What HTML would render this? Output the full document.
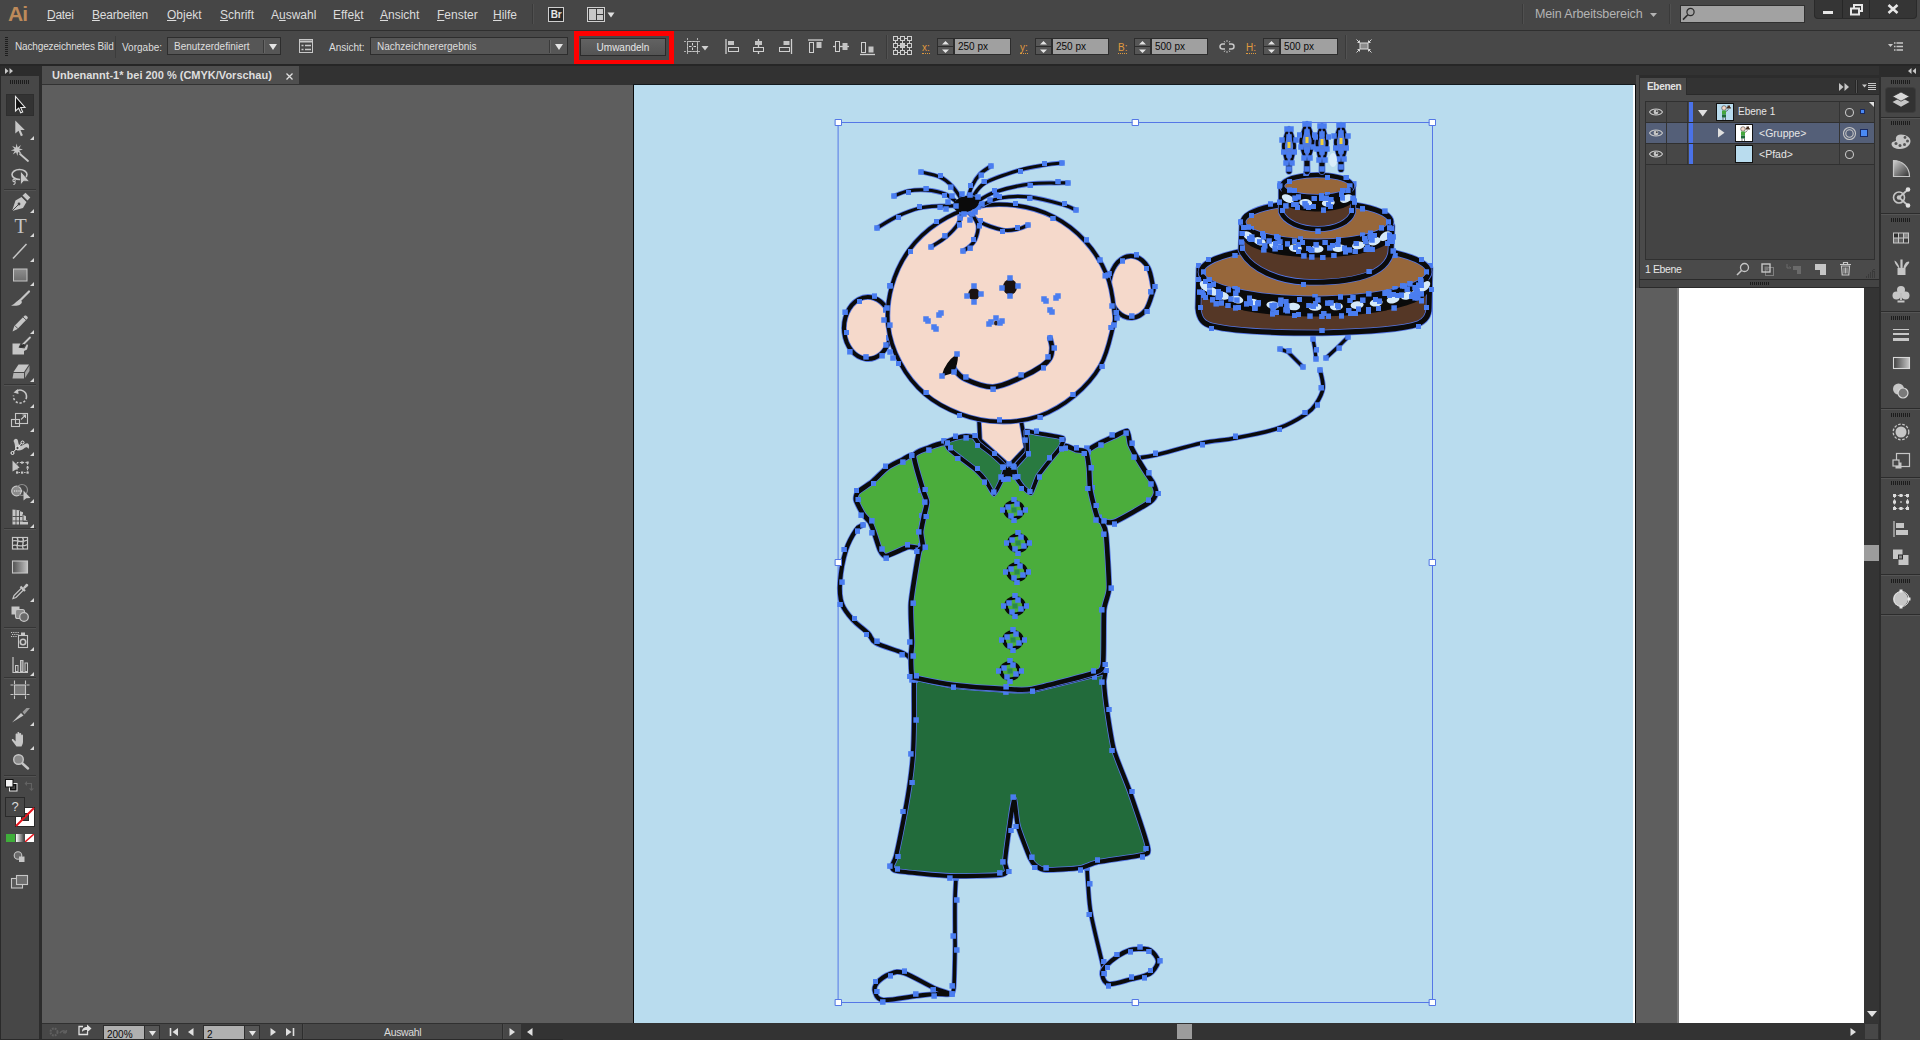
<!DOCTYPE html>
<html lang="de">
<head>
<meta charset="utf-8">
<title>Adobe Illustrator</title>
<style>
html,body{margin:0;padding:0;}
body{width:1920px;height:1040px;overflow:hidden;background:#474747;font-family:"Liberation Sans",sans-serif;font-size:11px;color:#d8d8d8;position:relative;}
.abs{position:absolute;}
#menubar{left:0;top:0;width:1920px;height:30px;background:#464646;}
#menubar .mi{position:absolute;top:8px;font-size:12px;color:#dcdcdc;white-space:nowrap;}
#menubar .mi u{text-decoration:underline;text-underline-offset:1px;}
#ctrl{left:0;top:31px;width:1920px;height:33px;background:#484848;border-top:1px solid #2f2f2f;box-sizing:content-box;top:30px;}
#ctrl .t{position:absolute;top:10px;font-size:10px;color:#dedede;white-space:nowrap;}
#ctrl .o{color:#e09a3e;}
.dd{position:absolute;top:6px;height:18px;background:#565656;border:1px solid #2d2d2d;box-sizing:border-box;}
.inp{position:absolute;top:7px;height:17px;background:#a0a0a0;border:1px solid #2d2d2d;box-sizing:border-box;color:#0a0a0a;font-size:10px;line-height:15px;padding-left:3px;}
.spin{position:absolute;top:7px;width:17px;height:17px;background:#565656;border:1px solid #2d2d2d;box-sizing:border-box;}
#gap{left:0;top:64px;width:1920px;height:2px;background:#262626;}
#tools{left:0;top:66px;width:39px;height:974px;background:#474747;border-left:1px solid #2a2a2a;box-sizing:border-box;}
#toolsgap{left:39px;top:66px;width:3px;height:974px;background:#2c2c2c;}
#tabbar{left:42px;top:66px;width:1837px;height:19px;background:#323232;}
#tab{left:42px;top:66px;width:257px;height:18px;background:#4f4f4f;}
#canvas{left:42px;top:85px;width:1822px;height:938px;background:#5e5e5e;}
#artboard{left:634px;top:85px;width:999px;height:938px;background:#b9dcee;}
#status{left:42px;top:1023px;width:1837px;height:17px;background:#333333;}
#dock{left:1881px;top:66px;width:39px;height:974px;background:#474747;}
</style>
</head>
<body>
<div id="menubar" class="abs">
<span class="abs" style="left:8px;top:0px;font-size:21px;font-weight:bold;color:#bd8a5a;letter-spacing:-0.8px;line-height:27px;">Ai</span>
<span class="mi" style="left:47px;letter-spacing:-0.3px"><u>D</u>atei</span>
<span class="mi" style="left:92px;letter-spacing:-0.2px"><u>B</u>earbeiten</span>
<span class="mi" style="left:167px"><u>O</u>bjekt</span>
<span class="mi" style="left:220px"><u>S</u>chrift</span>
<span class="mi" style="left:271px">A<u>u</u>swahl</span>
<span class="mi" style="left:333px">Effe<u>k</u>t</span>
<span class="mi" style="left:380px"><u>A</u>nsicht</span>
<span class="mi" style="left:437px"><u>F</u>enster</span>
<span class="mi" style="left:493px"><u>H</u>ilfe</span>
<div class="abs" style="left:532px;top:4px;width:1px;height:20px;background:#3a3a3a;border-right:1px solid #505050"></div>
<div class="abs" style="left:548px;top:7px;width:16px;height:15px;box-sizing:border-box;border:1px solid #cfcfcf;background:#2a2a2a;color:#e6e6e6;font-size:10px;font-weight:bold;line-height:13px;text-align:center;letter-spacing:-0.3px;">Br</div>
<svg class="abs" style="left:587px;top:7px" width="28" height="16" viewBox="0 0 28 16"><rect x="0.5" y="0.5" width="17" height="14" fill="#3a3a3a" stroke="#cfcfcf"/><rect x="2" y="2" width="7" height="11" fill="#c8c8c8"/><rect x="10" y="2" width="6" height="5" fill="#c8c8c8"/><rect x="10" y="8" width="6" height="5" fill="#c8c8c8"/><path d="M20.5 5.5h7l-3.5 5z" fill="#e0e0e0"/></svg>
<div class="abs" style="left:1522px;top:4px;width:1px;height:20px;background:#3a3a3a;border-right:1px solid #505050"></div>
<span class="abs" style="left:1535px;top:7px;font-size:12.5px;color:#b4b4b4;white-space:nowrap;letter-spacing:-0.12px" id="mab">Mein Arbeitsbereich</span>
<svg class="abs" style="left:1650px;top:13px" width="7" height="4"><path d="M0 0h7l-3.500 4z" fill="#b4b4b4"/></svg>
<div class="abs" style="left:1669px;top:4px;width:1px;height:20px;background:#3a3a3a;border-right:1px solid #505050"></div>
<div class="abs" style="left:1680px;top:5px;width:125px;height:18px;box-sizing:border-box;background:#a2a2a2;border:1px solid #303030;"></div>
<svg class="abs" style="left:1682px;top:7px" width="14" height="14" viewBox="0 0 14 14"><circle cx="8.500" cy="5" r="3.600" fill="none" stroke="#2a2a2a" stroke-width="1.200"/><path d="M5.800 7.800L1 12.600" stroke="#2a2a2a" stroke-width="1.600"/></svg>
<div class="abs" style="left:1814px;top:0;width:103px;height:19px;background:#353535;border:1px solid #2a2a2a;border-top:none;border-radius:0 0 4px 4px;box-sizing:border-box;"></div>
<div class="abs" style="left:1842px;top:0;width:1px;height:18px;background:#262626"></div>
<div class="abs" style="left:1869px;top:0;width:1px;height:18px;background:#262626"></div>
<div class="abs" style="left:1823px;top:11px;width:10px;height:3px;background:#e6e6e6"></div>
<svg class="abs" style="left:1850px;top:4px" width="13" height="12" viewBox="0 0 13 12"><rect x="4" y="1" width="8" height="6" fill="none" stroke="#e6e6e6" stroke-width="2"/><rect x="1" y="4.500" width="8" height="6" fill="#353535" stroke="#e6e6e6" stroke-width="2"/></svg>
<svg class="abs" style="left:1887px;top:4px" width="12" height="10" viewBox="0 0 12 10"><path d="M1.500 1L10.500 9M10.500 1L1.500 9" stroke="#e6e6e6" stroke-width="2.600"/></svg>
</div>
<div id="ctrl" class="abs">
<div class="abs" style="left:5px;top:6px;width:3px;height:20px;background:repeating-linear-gradient(to bottom,#1e1e1e 0 1px,transparent 1px 2px)"></div>
<span class="t" style="left:15px;letter-spacing:-0.15px">Nachgezeichnetes Bild</span>
<div class="abs" style="left:115px;top:5px;width:1px;height:22px;background:#3c3c3c"></div>
<span class="t" style="left:122px;top:11px">Vorgabe:</span>
<div class="dd" style="left:167px;width:114px"></div>
<span class="t" style="left:174px">Benutzerdefiniert</span>
<div class="abs" style="left:263px;top:9px;width:1px;height:13px;background:#3a3a3a;border-right:1px solid #666"></div>
<svg class="abs" style="left:269px;top:13px" width="8" height="6"><path d="M0 0h8l-4 6z" fill="#e4e4e4"/></svg>
<svg class="abs" style="left:299px;top:8px" width="15" height="15" viewBox="0 0 15 15"><rect x="0.500" y="0.500" width="13" height="13" fill="none" stroke="#c8c8c8"/><path d="M1 2.500h12" stroke="#c8c8c8" stroke-width="2"/><path d="M2.500 6.500h2M6 6.500h6M2.500 10.500h2M6 10.500h6" stroke="#c8c8c8" stroke-width="1.300"/></svg>
<span class="t" style="left:329px;top:11px">Ansicht:</span>
<div class="dd" style="left:370px;width:198px"></div>
<span class="t" style="left:377px">Nachzeichnerergebnis</span>
<div class="abs" style="left:549px;top:9px;width:1px;height:13px;background:#3a3a3a;border-right:1px solid #666"></div>
<svg class="abs" style="left:555px;top:13px" width="8" height="6"><path d="M0 0h8l-4 6z" fill="#e4e4e4"/></svg>
<div class="abs" style="left:574px;top:0px;width:100px;height:34px;box-sizing:border-box;border:5px solid #ff0000;"></div>
<div class="abs" style="left:580px;top:7px;width:86px;height:18px;box-sizing:border-box;border:1px solid #2b2b2b;background:linear-gradient(#626262,#545454);color:#e6e6e6;font-size:10px;line-height:17px;text-align:center;">Umwandeln</div>
<svg class="abs" style="left:684px;top:7px" width="26" height="18" viewBox="0 0 26 18"><rect x="3.500" y="3.500" width="10" height="10" fill="none" stroke="#c8c8c8"/><path d="M0 3.500h17M0 13.500h17M3.500 0v17M13.500 0v17" stroke="#b0b0b0" stroke-width="1" stroke-dasharray="2 1.500"/><path d="M5 8.500h2.500M9.500 8.500H12M8.500 5v2.500M8.500 9.500V12" stroke="#d8d8d8"/><path d="M17.500 8h7L21 12.500z" fill="#d0d0d0"/></svg><svg class="abs" style="left:725px;top:8px" width="15" height="16" viewBox="0 0 15 16"><path d="M1 0v15" stroke="#d0d0d0" stroke-width="1.300"/><rect x="3" y="2" width="6" height="4" fill="#c4c4c4"/><rect x="3.500" y="8.500" width="10" height="4" fill="none" stroke="#d0d0d0"/></svg>
<svg class="abs" style="left:752px;top:8px" width="13" height="16" viewBox="0 0 13 16"><path d="M6.500 0v15" stroke="#d0d0d0" stroke-width="1.300"/><rect x="3" y="2" width="7" height="4" fill="#c4c4c4"/><rect x="1.500" y="8.500" width="10" height="4" fill="#484848" stroke="#d0d0d0"/></svg>
<svg class="abs" style="left:778px;top:8px" width="15" height="16" viewBox="0 0 15 16"><path d="M13.500 0v15" stroke="#d0d0d0" stroke-width="1.300"/><rect x="5.500" y="2" width="6" height="4" fill="#c4c4c4"/><rect x="1.500" y="8.500" width="10" height="4" fill="none" stroke="#d0d0d0"/></svg>
<svg class="abs" style="left:808px;top:8px" width="16" height="15" viewBox="0 0 16 15"><path d="M0 1h15" stroke="#d0d0d0" stroke-width="1.300"/><rect x="1.500" y="3.500" width="4" height="10" fill="none" stroke="#d0d0d0"/><rect x="8.500" y="3" width="5" height="6" fill="#c4c4c4"/></svg>
<svg class="abs" style="left:833px;top:9px" width="17" height="13" viewBox="0 0 17 13"><path d="M0 6.500h16" stroke="#d0d0d0" stroke-width="1.300"/><rect x="2.500" y="1.500" width="4" height="10" fill="#484848" stroke="#d0d0d0"/><rect x="9.500" y="3" width="5" height="7" fill="#c4c4c4"/></svg>
<svg class="abs" style="left:860px;top:10px" width="16" height="15" viewBox="0 0 16 15"><path d="M0 13.500h15" stroke="#d0d0d0" stroke-width="1.300"/><rect x="1.500" y="1.500" width="4" height="10" fill="none" stroke="#d0d0d0"/><rect x="8.500" y="5.500" width="5" height="6" fill="#c4c4c4"/></svg>
<div class="abs" style="left:886px;top:4px;width:1px;height:24px;background:#3a3a3a;border-right:1px solid #525252"></div>
<svg class="abs" style="left:893px;top:5px" width="20" height="20" viewBox="0 0 20 20"><path d="M2.500 2.500h14v14h-14zM9.500 2.500v14M2.500 9.500h14" fill="none" stroke="#cfcfcf" stroke-width="1"/><rect x="0.5" y="0.5" width="4" height="4" fill="#484848" stroke="#cfcfcf"/><rect x="7.5" y="0.5" width="4" height="4" fill="#484848" stroke="#cfcfcf"/><rect x="14.5" y="0.5" width="4" height="4" fill="#484848" stroke="#cfcfcf"/><rect x="0.5" y="7.5" width="4" height="4" fill="#484848" stroke="#cfcfcf"/><rect x="7.5" y="7.5" width="4" height="4" fill="#c8c8c8" stroke="#cfcfcf"/><rect x="14.5" y="7.5" width="4" height="4" fill="#484848" stroke="#cfcfcf"/><rect x="0.5" y="14.5" width="4" height="4" fill="#484848" stroke="#cfcfcf"/><rect x="7.5" y="14.5" width="4" height="4" fill="#484848" stroke="#cfcfcf"/><rect x="14.5" y="14.5" width="4" height="4" fill="#484848" stroke="#cfcfcf"/></svg>
<span class="t o" style="left:922px;top:11px;border-bottom:1px dotted #e09a3e;line-height:11px">x:</span>
<div class="spin" style="left:937px"></div><div class="abs" style="left:937px;top:15px;width:17px;height:1px;background:#2d2d2d"></div>
<svg class="abs" style="left:942px;top:10px" width="7" height="12" viewBox="0 0 7 12"><path d="M0 3.500h7L3.500 0z M0 8.500h7L3.500 12z" fill="#e4e4e4"/></svg><div class="inp" style="left:954px;width:57px">250 px</div>
<span class="t o" style="left:1020px;top:11px;border-bottom:1px dotted #e09a3e;line-height:11px">y:</span>
<div class="spin" style="left:1035px"></div><div class="abs" style="left:1035px;top:15px;width:17px;height:1px;background:#2d2d2d"></div>
<svg class="abs" style="left:1040px;top:10px" width="7" height="12" viewBox="0 0 7 12"><path d="M0 3.500h7L3.500 0z M0 8.500h7L3.500 12z" fill="#e4e4e4"/></svg><div class="inp" style="left:1052px;width:57px">250 px</div>
<span class="t o" style="left:1118px;top:11px;border-bottom:1px dotted #e09a3e;line-height:11px">B:</span>
<div class="spin" style="left:1134px"></div><div class="abs" style="left:1134px;top:15px;width:17px;height:1px;background:#2d2d2d"></div>
<svg class="abs" style="left:1139px;top:10px" width="7" height="12" viewBox="0 0 7 12"><path d="M0 3.500h7L3.500 0z M0 8.500h7L3.500 12z" fill="#e4e4e4"/></svg><div class="inp" style="left:1151px;width:57px">500 px</div>
<svg class="abs" style="left:1219px;top:8px" width="16" height="15" viewBox="0 0 16 15"><path d="M6 5H3.500a2.500 2.500 0 0 0 0 5H6M10 5h2.500a2.500 2.500 0 0 1 0 5H10" fill="none" stroke="#c8c8c8" stroke-width="1.500"/><path d="M5 2l1 1.500M8 1v2M11 2l-1 1.500M5 13l1-1.500M8 14v-2M11 13l-1-1.500" stroke="#b8b8b8"/></svg><span class="t o" style="left:1246px;top:11px;border-bottom:1px dotted #e09a3e;line-height:11px">H:</span>
<div class="spin" style="left:1263px"></div><div class="abs" style="left:1263px;top:15px;width:17px;height:1px;background:#2d2d2d"></div>
<svg class="abs" style="left:1268px;top:10px" width="7" height="12" viewBox="0 0 7 12"><path d="M0 3.500h7L3.500 0z M0 8.500h7L3.500 12z" fill="#e4e4e4"/></svg><div class="inp" style="left:1280px;width:58px">500 px</div>
<div class="abs" style="left:1345px;top:4px;width:1px;height:24px;background:#3a3a3a;border-right:1px solid #525252"></div>
<svg class="abs" style="left:1356px;top:8px" width="16" height="15" viewBox="0 0 16 15"><rect x="4" y="4" width="8" height="6" fill="#8a8a8a" stroke="#d8d8d8"/><path d="M0.500 0.500l3 3M15.500 0.500l-3 3M0.500 13.500l3-3M15.500 13.500l-3-3" stroke="#d8d8d8"/><path d="M1.500 3.500h2v-2M14.500 3.500h-2v-2M1.500 10.500h2v2M14.500 10.500h-2v2" fill="none" stroke="#d8d8d8"/></svg>
<svg class="abs" style="left:1888px;top:11px" width="16" height="9" viewBox="0 0 16 9"><path d="M0 2h5L2.500 5z" fill="#c8c8c8"/><path d="M6 1h1.500M8.500 1H15M6 4.500h1.500M8.500 4.500H15M6 8h1.500M8.500 8H15" stroke="#c8c8c8" stroke-width="1.300"/></svg>
</div>
<div id="gap" class="abs"></div>
<!--TOOLS--><div id="tools" class="abs">
<div class="abs" style="left:0;top:0;width:39px;height:10px;background:#2c2c2c"></div>
<svg class="abs" style="left:4px;top:2px" width="9" height="6"><path d="M0 0l3.500 3L0 6zM4.500 0L8 3 4.500 6z" fill="#c8c8c8"/></svg>
<div class="abs" style="left:9px;top:14px;width:20px;height:4px;background:repeating-linear-gradient(to right,#1c1c1c 0 1px,transparent 1px 2px)"></div>
<div class="abs" style="left:5px;top:28px;width:28px;height:22px;background:#333333;border:1px solid #2e2e2e;box-sizing:border-box"></div>
<svg class="abs" style="left:7px;top:27px" width="24" height="24" viewBox="0 0 24 24"><path d="M7.500 3.500v14.500l3.200-2.800 2 4.600 2-0.900-2-4.400h4.300z" fill="#111" stroke="#e8e8e8" stroke-width="1.100" stroke-linejoin="miter"/></svg>
<svg class="abs" style="left:7px;top:51px" width="24" height="24" viewBox="0 0 24 24"><path d="M7.300 3.500v13l3.200-2.800 2.400 5.500 2-0.900-2.400-5.300h4.300z" fill="#c6c6c6"/></svg>
<svg class="abs" style="left:29px;top:70px" width="4" height="4"><path d="M4 0v4H0z" fill="#d8d8d8"/></svg>
<svg class="abs" style="left:7px;top:74px" width="24" height="24" viewBox="0 0 24 24"><path d="M8.500 3.500l1.200 4 3.300-2.500-1.800 3.600 3.800 0.800-3.700 1.200 2.200 3.200-3.500-1.700-0.500 4-1.400-3.800-3.300 2.300 1.900-3.500-3.900-0.600 3.700-1.400-2.300-3.200 3.600 1.600z" fill="#c6c6c6"/><path d="M12 14l8 7" stroke="#c6c6c6" stroke-width="1.800" stroke-linecap="round"/></svg>
<svg class="abs" style="left:7px;top:99px" width="24" height="24" viewBox="0 0 24 24"><ellipse cx="11.500" cy="9.500" rx="7.500" ry="5" fill="none" stroke="#c6c6c6" stroke-width="1.600"/><path d="M6 14c-2 1-1 3 0.500 2.500S7 14 6 14zm0.800 2.500c1 1.500 0 3-1.500 3" fill="none" stroke="#c6c6c6" stroke-width="1.100"/><path d="M12.500 6v14l3.300-3.800 5.700 0.300z" fill="#c6c6c6" stroke="#474747" stroke-width="0.800"/></svg>
<div class="abs" style="left:3px;top:123px;width:32px;height:1px;background:#353535;border-bottom:1px solid #525252"></div>
<svg class="abs" style="left:7px;top:124px" width="24" height="24" viewBox="0 0 24 24"><path d="M4 21l3.500-10.500 6-3.500 5 5-3.500 6z" fill="#c6c6c6"/><path d="M4 21l6.500-6.500" stroke="#474747" stroke-width="1"/><circle cx="11" cy="14" r="1.400" fill="#474747"/><path d="M14.500 5.500l3-2.800 4.800 4.800-2.800 3z" fill="#c6c6c6"/><path d="M13.800 6.500l5 5" stroke="#474747" stroke-width="1"/></svg>
<svg class="abs" style="left:29px;top:143px" width="4" height="4"><path d="M4 0v4H0z" fill="#d8d8d8"/></svg>
<span class="abs" style="left:12px;top:148px;width:15px;text-align:center;font-family:'Liberation Serif',serif;font-size:20px;line-height:24px;color:#c6c6c6;">T</span>
<svg class="abs" style="left:29px;top:167px" width="4" height="4"><path d="M4 0v4H0z" fill="#d8d8d8"/></svg>
<svg class="abs" style="left:7px;top:173px" width="24" height="24" viewBox="0 0 24 24"><path d="M5 19.500L18.500 5" stroke="#c6c6c6" stroke-width="1.500"/></svg>
<svg class="abs" style="left:29px;top:192px" width="4" height="4"><path d="M4 0v4H0z" fill="#d8d8d8"/></svg>
<svg class="abs" style="left:7px;top:197px" width="24" height="24" viewBox="0 0 24 24"><defs><linearGradient id="rg" x1="0" y1="0" x2="0" y2="1"><stop offset="0" stop-color="#8e8e8e"/><stop offset="1" stop-color="#6e6e6e"/></linearGradient></defs><rect x="5.500" y="6" width="13.500" height="12" fill="url(#rg)" stroke="#c6c6c6" stroke-width="1"/></svg>
<svg class="abs" style="left:29px;top:216px" width="4" height="4"><path d="M4 0v4H0z" fill="#d8d8d8"/></svg>
<svg class="abs" style="left:7px;top:221px" width="24" height="24" viewBox="0 0 24 24"><path d="M21 4.500L11.500 14" stroke="#c6c6c6" stroke-width="2.200" stroke-linecap="round"/><path d="M11.800 12.500l2.200 2.200c-0.500 3-4 4.800-11 3.800 3.500-0.800 4.500-4 8.800-6z" fill="#c6c6c6"/></svg>
<svg class="abs" style="left:7px;top:245px" width="24" height="24" viewBox="0 0 24 24"><path d="M4.500 20.500l1.800-5.500L16.500 4.800c1.200-1.200 4.200 1.300 3 2.800L9.500 18z" fill="#c6c6c6"/><path d="M6.800 14.500l3.300 3.300" stroke="#474747" stroke-width="0.900"/><path d="M15 6l3.500 3.300" stroke="#474747" stroke-width="0.900"/></svg>
<svg class="abs" style="left:29px;top:264px" width="4" height="4"><path d="M4 0v4H0z" fill="#d8d8d8"/></svg>
<svg class="abs" style="left:7px;top:268px" width="24" height="24" viewBox="0 0 24 24"><path d="M4.500 9.500h8l-2 4 6 1 2.500-4.500 1 1.500-1 4-3 1.500v3.500h-11.500z" fill="#c6c6c6"/><path d="M22 3.500L15 10.500" stroke="#c6c6c6" stroke-width="1.800" stroke-linecap="round"/><path d="M16 10c-1.500 0.300-3.500 1-5 3.500 2.500 0.500 5-0.500 6-2.300z" fill="#2e2e2e"/></svg>
<svg class="abs" style="left:7px;top:293px" width="24" height="24" viewBox="0 0 24 24"><path d="M10.500 5.500h10.500l-5 7.500H5.500z" fill="#c6c6c6"/><path d="M5.500 14h10.500v5.500H4.500z" fill="#b4b4b4"/><path d="M17 13.500L21.500 6.500v5.500L17 19z" fill="#a0a0a0"/></svg>
<svg class="abs" style="left:29px;top:312px" width="4" height="4"><path d="M4 0v4H0z" fill="#d8d8d8"/></svg>
<div class="abs" style="left:3px;top:318px;width:32px;height:1px;background:#353535;border-bottom:1px solid #525252"></div>
<svg class="abs" style="left:7px;top:319px" width="24" height="24" viewBox="0 0 24 24"><path d="M8 6.500A6.500 6.500 0 0 1 18.500 12" fill="none" stroke="#c6c6c6" stroke-width="1.600"/><path d="M18.500 12A6.500 6.500 0 1 1 5.600 10.500" fill="none" stroke="#c6c6c6" stroke-width="1.600" stroke-dasharray="2.200 1.800"/><path d="M5.500 7.500l4.500-3.500 0.500 5z" fill="#c6c6c6"/></svg>
<svg class="abs" style="left:29px;top:338px" width="4" height="4"><path d="M4 0v4H0z" fill="#d8d8d8"/></svg>
<svg class="abs" style="left:7px;top:343px" width="24" height="24" viewBox="0 0 24 24"><rect x="7.500" y="4.500" width="12" height="10" fill="none" stroke="#c6c6c6" stroke-width="1.100"/><rect x="3.500" y="10.500" width="8" height="7" fill="none" stroke="#c6c6c6" stroke-width="1.100"/><path d="M13 10.500l4.500-4.500M14.500 6h3v3" fill="none" stroke="#c6c6c6" stroke-width="1.100"/></svg>
<svg class="abs" style="left:29px;top:362px" width="4" height="4"><path d="M4 0v4H0z" fill="#d8d8d8"/></svg>
<svg class="abs" style="left:7px;top:367px" width="24" height="24" viewBox="0 0 24 24"><path d="M5.500 8c1.500-3.500 4-2.500 4.500 0 0.500 2.500 1 5.500 4 4.500 3-1 5-3.500 6.500-1.500 1 1.500 0.500 4 0 5-0.800-2-2.500-2.500-4-1-2 2-6 3.500-8.500 1.500C6.500 15 7.500 11 5.500 8z" fill="#c6c6c6"/><path d="M4.500 20L14.500 9" stroke="#f0f0f0" stroke-width="1"/><circle cx="4.500" cy="20" r="1.500" fill="#474747" stroke="#f0f0f0"/><circle cx="9.500" cy="15" r="1.700" fill="#474747" stroke="#f0f0f0"/><circle cx="14.500" cy="9.500" r="1.500" fill="#474747" stroke="#f0f0f0"/></svg>
<svg class="abs" style="left:29px;top:386px" width="4" height="4"><path d="M4 0v4H0z" fill="#d8d8d8"/></svg>
<svg class="abs" style="left:7px;top:390px" width="24" height="24" viewBox="0 0 24 24"><path d="M4.500 4.500v11l7-4z" fill="#c6c6c6"/><rect x="9" y="6.500" width="10.500" height="10" fill="none" stroke="#c6c6c6" stroke-width="1" stroke-dasharray="1.500 1.300"/><g fill="#c6c6c6"><rect x="8" y="15.500" width="2.200" height="2.200"/><rect x="13" y="15.500" width="2.200" height="2.200"/><rect x="18.500" y="15.500" width="2.200" height="2.200"/><rect x="18.500" y="10.500" width="2.200" height="2.200"/><rect x="18.500" y="5.500" width="2.200" height="2.200"/><rect x="13" y="5.500" width="2.200" height="2.200"/></g></svg>
<svg class="abs" style="left:7px;top:414px" width="24" height="24" viewBox="0 0 24 24"><circle cx="8.500" cy="11" r="4.800" fill="#8a8a8a" stroke="#c6c6c6" stroke-width="1.200"/><circle cx="14" cy="10" r="5.500" fill="none" stroke="#909090" stroke-width="1.200"/><path d="M6 11h9" stroke="#f0f0f0" stroke-width="1.200" stroke-dasharray="1.200 1"/><path d="M15.500 10.500v10l2.800-2.300 4.200-0.200z" fill="#c6c6c6"/></svg>
<svg class="abs" style="left:29px;top:433px" width="4" height="4"><path d="M4 0v4H0z" fill="#d8d8d8"/></svg>
<svg class="abs" style="left:7px;top:439px" width="24" height="24" viewBox="0 0 24 24"><path d="M4.500 4.500v15h15.500v-3.500l-2-0.800v-4l-3-1.500v-2.500l-3.500-1.200v-0.800z" fill="#c6c6c6"/><path d="M8 5v15M11.500 6v14M4.500 11.500h10M4.500 16h13.500M15 9v7.500h5" stroke="#474747" stroke-width="0.900" fill="none"/></svg>
<svg class="abs" style="left:29px;top:458px" width="4" height="4"><path d="M4 0v4H0z" fill="#d8d8d8"/></svg>
<div class="abs" style="left:3px;top:462px;width:32px;height:1px;background:#353535;border-bottom:1px solid #525252"></div>
<svg class="abs" style="left:7px;top:465px" width="24" height="24" viewBox="0 0 24 24"><rect x="4.500" y="6.500" width="15" height="11.500" fill="#3a3a3a" stroke="#c6c6c6" stroke-width="1.200"/><path d="M4.500 10c4-2 6 3 15-1M4.500 14.500c5-2 8 3 15-1M9 6.500c3 4-2 8 1 11.500M14.500 6.500c3 4-2 8 1 11.500" fill="none" stroke="#c6c6c6" stroke-width="1.300"/></svg>
<svg class="abs" style="left:7px;top:489px" width="24" height="24" viewBox="0 0 24 24"><defs><linearGradient id="gg" x1="0" y1="0" x2="1" y2="0"><stop offset="0" stop-color="#505050"/><stop offset="1" stop-color="#c0c0c0"/></linearGradient></defs><rect x="4.500" y="6" width="15" height="12" fill="url(#gg)" stroke="#c6c6c6" stroke-width="1.100"/></svg>
<svg class="abs" style="left:7px;top:513px" width="24" height="24" viewBox="0 0 24 24"><path d="M5 19.500l1-3 7.500-7.500 2 2-7.500 7.500z" fill="none" stroke="#c6c6c6" stroke-width="1.200"/><path d="M12.500 7.500l4.500 4.500" stroke="#c6c6c6" stroke-width="2.200"/><path d="M15 8.500l3-3.500c1-1 3 1 2 2l-3.500 3z" fill="#c6c6c6"/></svg>
<svg class="abs" style="left:29px;top:532px" width="4" height="4"><path d="M4 0v4H0z" fill="#d8d8d8"/></svg>
<svg class="abs" style="left:7px;top:536px" width="24" height="24" viewBox="0 0 24 24"><rect x="3.500" y="4.500" width="8" height="8" fill="#c6c6c6"/><rect x="7.500" y="7.500" width="9" height="9" rx="2" fill="#8a8a8a" stroke="#c6c6c6" stroke-width="1.100"/><circle cx="16" cy="15" r="4.300" fill="#6a6a6a" stroke="#c6c6c6" stroke-width="1.300"/></svg>
<div class="abs" style="left:3px;top:561px;width:32px;height:1px;background:#353535;border-bottom:1px solid #525252"></div>
<svg class="abs" style="left:7px;top:562px" width="24" height="24" viewBox="0 0 24 24"><rect x="10.500" y="7.500" width="9" height="12" fill="none" stroke="#c6c6c6" stroke-width="1.100"/><rect x="13" y="4.500" width="4" height="2.500" fill="#c6c6c6"/><circle cx="15" cy="14" r="2.700" fill="none" stroke="#c6c6c6" stroke-width="1.600"/><path d="M3 4.500h8M4 6.500h7M3 8.500h6" stroke="#c6c6c6" stroke-width="1.100" stroke-dasharray="1.200 1"/></svg>
<svg class="abs" style="left:29px;top:581px" width="4" height="4"><path d="M4 0v4H0z" fill="#d8d8d8"/></svg>
<svg class="abs" style="left:7px;top:587px" width="24" height="24" viewBox="0 0 24 24"><path d="M5 4v15.500h15" fill="none" stroke="#c6c6c6" stroke-width="1.200"/><rect x="7.500" y="12.500" width="2.500" height="6" fill="none" stroke="#c6c6c6"/><rect x="12.500" y="7.500" width="2.500" height="11" fill="#8a8a8a" stroke="#c6c6c6"/><rect x="17" y="10" width="2.500" height="8.500" fill="none" stroke="#c6c6c6"/></svg>
<svg class="abs" style="left:29px;top:606px" width="4" height="4"><path d="M4 0v4H0z" fill="#d8d8d8"/></svg>
<div class="abs" style="left:3px;top:611px;width:32px;height:1px;background:#353535;border-bottom:1px solid #525252"></div>
<svg class="abs" style="left:7px;top:613px" width="24" height="24" viewBox="0 0 24 24"><rect x="6.500" y="6" width="11" height="9.500" fill="#7a7a7a" stroke="#c6c6c6" stroke-width="1.100"/><path d="M2.500 6h3M18.500 6h3M2.500 15.500h3M18.500 15.500h3M6.500 1.500v3.500M17.500 1.500v3.500M6.500 16.500v3.500M17.500 16.500v3.500" stroke="#c6c6c6" stroke-width="1.100"/></svg>
<svg class="abs" style="left:7px;top:637px" width="24" height="24" viewBox="0 0 24 24"><path d="M4 19.500l9-9.500 2.500 2.500z" fill="#c6c6c6"/><path d="M14.500 9l4-4h3.500l-5.500 6.500z" fill="#9a9a9a"/></svg>
<svg class="abs" style="left:29px;top:656px" width="4" height="4"><path d="M4 0v4H0z" fill="#d8d8d8"/></svg>
<svg class="abs" style="left:7px;top:661px" width="24" height="24" viewBox="0 0 24 24"><path d="M8.500 19.500l-4.500-6c-0.800-1.200 0.700-2 1.600-1l2 2v-7c0-1.300 1.800-1.300 1.800 0v-1.500c0-1.300 1.900-1.300 1.900 0v1c0-1.300 1.900-1.300 1.900 0v1.500c0-1.200 1.800-1.200 1.800 0v6.500c0 2-1 3-1.500 4.500z" fill="#c6c6c6"/></svg>
<svg class="abs" style="left:29px;top:680px" width="4" height="4"><path d="M4 0v4H0z" fill="#d8d8d8"/></svg>
<svg class="abs" style="left:7px;top:684px" width="24" height="24" viewBox="0 0 24 24"><circle cx="10.500" cy="9.500" r="4.800" fill="#8a8a8a" stroke="#c6c6c6" stroke-width="1.400"/><path d="M14.500 13.500l5.500 5" stroke="#c6c6c6" stroke-width="2.400" stroke-linecap="round"/></svg>
<div class="abs" style="left:3px;top:709px;width:32px;height:1px;background:#353535;border-bottom:1px solid #525252"></div>
<svg class="abs" style="left:4px;top:713px" width="13" height="13" viewBox="0 0 13 13"><rect x="4.500" y="4.500" width="7.500" height="7.500" fill="#111" stroke="#e8e8e8"/><rect x="6.500" y="6.500" width="3.500" height="3.500" fill="#474747"/><rect x="0.500" y="0.500" width="7.500" height="7.500" fill="#f4f4f4" stroke="#111"/></svg>
<svg class="abs" style="left:23px;top:714px" width="12" height="12" viewBox="0 0 12 12"><path d="M2 3.500h5.500v5.500" fill="none" stroke="#626262" stroke-width="1.100"/><path d="M0.500 3.500l2.500-2.500v5zM7.500 11l-2.500-2.500h5z" fill="#626262"/></svg>
<svg class="abs" style="left:14px;top:741px" width="20" height="20" viewBox="0 0 20 20"><rect x="0.500" y="0.500" width="19" height="19" fill="#ffffff" stroke="#2a2a2a"/><rect x="6.500" y="6.500" width="7" height="7" fill="#474747" stroke="#2a2a2a"/><path d="M1 19L19 1" stroke="#e8141c" stroke-width="2"/></svg>
<div class="abs" style="left:4px;top:731px;width:20px;height:20px;box-sizing:border-box;background:#474747;border:1px solid #2a2a2a;color:#dcdcdc;font-size:13px;line-height:18px;text-align:center;">?</div>
<div class="abs" style="left:5px;top:768px;width:9px;height:8px;background:#3fae3a;border:1px solid #2e2e2e;box-sizing:content-box;border-width:0"></div>
<div class="abs" style="left:15px;top:768px;width:8px;height:8px;background:linear-gradient(to right,#fff,#444)"></div>
<svg class="abs" style="left:24px;top:768px" width="9" height="8" viewBox="0 0 9 8"><rect width="9" height="8" fill="#fff"/><path d="M0 8L9 0" stroke="#e8141c" stroke-width="1.500"/></svg>
<svg class="abs" style="left:7px;top:779px" width="24" height="24" viewBox="0 0 24 24"><circle cx="10" cy="10.500" r="3.800" fill="#6a6a6a" stroke="#c6c6c6" stroke-width="1.100"/><rect x="11" y="11.500" width="5.500" height="5.500" fill="#c6c6c6"/></svg>
<svg class="abs" style="left:7px;top:803px" width="24" height="24" viewBox="0 0 24 24"><rect x="3.500" y="9.500" width="11" height="9.500" fill="#5a5a5a" stroke="#c6c6c6" stroke-width="1.100"/><rect x="8.500" y="6.500" width="11" height="9" fill="#6e6e6e" stroke="#c6c6c6" stroke-width="1.100"/></svg>
</div><!--/TOOLS-->
<div id="toolsgap" class="abs"></div>
<!--DOC--><div id="tabbar" class="abs"></div>
<div id="tab" class="abs"><span class="abs" style="left:10px;top:3px;font-size:11px;font-weight:bold;color:#dedede;white-space:nowrap" id="tabtxt">Unbenannt-1* bei 200 % (CMYK/Vorschau)</span><svg class="abs" style="left:244px;top:7px" width="7" height="7"><path d="M0.500 0.500l6 6M6.500 0.500l-6 6" stroke="#e0e0e0" stroke-width="1.300"/></svg></div>
<div id="canvas" class="abs"></div>
<div id="artboard" class="abs"></div>
<div class="abs" style="left:633px;top:85px;width:1px;height:938px;background:#0a0a0a"></div>
<div class="abs" style="left:633px;top:84px;width:1003px;height:1px;background:#141a1e"></div>
<div class="abs" style="left:1633px;top:85px;width:2px;height:938px;background:#fafdff"></div>
<div class="abs" style="left:1635px;top:85px;width:1px;height:938px;background:#0a0a0a"></div>
<div class="abs" style="left:1677px;top:288px;width:2px;height:735px;background:#7a7a7a"></div>
<div class="abs" style="left:1679px;top:288px;width:185px;height:735px;background:#ffffff"></div>
<div class="abs" style="left:1864px;top:85px;width:15px;height:938px;background:#343434"></div>
<div class="abs" style="left:1864px;top:545px;width:15px;height:16px;background:#9c9c9c"></div>
<svg class="abs" style="left:1867px;top:1011px" width="10" height="6"><path d="M0 0h10L5 6z" fill="#e0e0e0"/></svg>
<div class="abs" style="left:1879px;top:66px;width:2px;height:974px;background:#2c2c2c"></div>
<div id="status" class="abs">
<div class="abs" style="left:0;top:0;width:479px;height:17px;background:#474747;border-top:1px solid #303030;box-sizing:border-box"></div>
<svg class="abs" style="left:7px;top:3px" width="20" height="12" viewBox="0 0 20 12"><circle cx="5" cy="6" r="3.500" fill="none" stroke="#606060" stroke-width="2" stroke-dasharray="1.800 1"/><path d="M11 7c2-3 5-3 6 0M17 7l-3-0.500M17 7l0.500-3" fill="none" stroke="#606060" stroke-width="1.500"/></svg>
<svg class="abs" style="left:36px;top:1px" width="14" height="12" viewBox="0 0 14 12"><path d="M5 2.500H1v8h8.500V8" fill="none" stroke="#e0e0e0" stroke-width="1.300"/><path d="M4 8c0-3.500 2-5 5-5V0.500l4.500 4L9 8.500V6C6.500 6 5 6.500 4 8z" fill="#e0e0e0"/></svg>
<div class="abs" style="left:61px;top:2px;width:42px;height:15px;background:#b0b0b0;border:1px solid #2e2e2e;border-bottom:none;box-sizing:border-box;color:#0a0a0a;font-size:10px;line-height:17px;padding-left:3px;">200%</div>
<div class="abs" style="left:103px;top:2px;width:15px;height:15px;background:#575757;border:1px solid #2e2e2e;border-left:none;border-bottom:none;box-sizing:border-box"></div><svg class="abs" style="left:107px;top:8px" width="7" height="5"><path d="M0 0h7L3.500 5z" fill="#e8e8e8"/></svg>
<svg class="abs" style="left:127px;top:4px" width="10" height="10" viewBox="0 0 10 10"><path d="M1.500 1v8" stroke="#e0e0e0" stroke-width="1.600"/><path d="M9 1v8L3.500 5z" fill="#e0e0e0"/></svg>
<svg class="abs" style="left:145px;top:4px" width="7" height="10" viewBox="0 0 7 10"><path d="M6.500 1v8L1 5z" fill="#e0e0e0"/></svg>
<div class="abs" style="left:161px;top:2px;width:42px;height:15px;background:#b0b0b0;border:1px solid #2e2e2e;border-bottom:none;box-sizing:border-box;color:#0a0a0a;font-size:10px;line-height:17px;padding-left:3px;">2</div>
<div class="abs" style="left:203px;top:2px;width:15px;height:15px;background:#575757;border:1px solid #2e2e2e;border-left:none;border-bottom:none;box-sizing:border-box"></div><svg class="abs" style="left:207px;top:8px" width="7" height="5"><path d="M0 0h7L3.500 5z" fill="#e8e8e8"/></svg>
<svg class="abs" style="left:228px;top:4px" width="7" height="10" viewBox="0 0 7 10"><path d="M0.500 1v8L6 5z" fill="#e0e0e0"/></svg>
<svg class="abs" style="left:243px;top:4px" width="10" height="10" viewBox="0 0 10 10"><path d="M8.500 1v8" stroke="#e0e0e0" stroke-width="1.600"/><path d="M1 1v8L6.500 5z" fill="#e0e0e0"/></svg>
<div class="abs" style="left:260px;top:1px;width:1px;height:16px;background:#2e2e2e;border-right:1px solid #4c4c4c"></div>
<span class="abs" style="left:342px;top:3px;font-size:10.500px;letter-spacing:-0.35px;color:#dcdcdc" id="ausw">Auswahl</span>
<div class="abs" style="left:460px;top:1px;width:1px;height:16px;background:#2e2e2e;border-right:1px solid #4c4c4c"></div>
<svg class="abs" style="left:467px;top:4px" width="7" height="10" viewBox="0 0 7 10"><path d="M0.500 1v8L6 5z" fill="#e0e0e0"/></svg>
<svg class="abs" style="left:484px;top:4px" width="7" height="10" viewBox="0 0 7 10"><path d="M6.500 1v8L1 5z" fill="#e0e0e0"/></svg>
<div class="abs" style="left:1135px;top:1px;width:15px;height:15px;background:#9c9c9c"></div>
<svg class="abs" style="left:1808px;top:4px" width="7" height="10" viewBox="0 0 7 10"><path d="M0.500 1v8L6 5z" fill="#e0e0e0"/></svg>
<div class="abs" style="left:1822px;top:0px;width:15px;height:17px;background:#474747;border:1px solid #333;box-sizing:border-box"></div>
<div class="abs" style="left:-42px;top:16px;width:563px;height:1px;background:#2a2a2a"></div>
</div>
<!--/DOC-->
<!--ART--><svg class="abs" style="left:634px;top:85px" width="999" height="938" viewBox="634 85 999 938">
<defs><marker id="an" markerUnits="userSpaceOnUse" markerWidth="5.500" markerHeight="5.500" refX="2.750" refY="2.750"><rect width="5.500" height="5.500" fill="#4a7df0"/></marker></defs>
<style>.m{marker-start:url(#an);marker-mid:url(#an);marker-end:url(#an)} .r{stroke-linecap:round;stroke-linejoin:round}</style>
<g stroke-linejoin="round" stroke-linecap="round">
<rect x="838.500" y="122.500" width="594" height="880" fill="none" stroke="#5577e6" stroke-width="1"/>
<path d="M863 525C861.8 525.8 858.8 525.8 856 530C853.2 534.2 848.7 541.3 846 550C843.3 558.7 840.7 573 840 582C839.3 591 839.8 597.7 842 604C844.2 610.3 848.7 615.2 853 620C857.3 624.8 864.2 629.2 868 633C871.8 636.8 870.2 639.7 876 643C881.8 646.3 897 650.2 903 653C909 655.8 910.5 658.8 912 660" fill="none" stroke="#5577e6" stroke-width="5.7" />
<path d="M863 525C861.8 525.8 858.8 525.8 856 530C853.2 534.2 848.7 541.3 846 550C843.3 558.7 840.7 573 840 582C839.3 591 839.8 597.7 842 604C844.2 610.3 848.7 615.2 853 620C857.3 624.8 864.2 629.2 868 633C871.8 636.8 870.2 639.7 876 643C881.8 646.3 897 650.2 903 653C909 655.8 910.5 658.8 912 660" fill="none" stroke="#0b0b0b" stroke-width="4.1" />
<path d="M863 525M857.7 531.1M844.1 549.4M842 582.1M840.1 604.7M854.5 618.6M866.6 634.4M877 641.2M902.1 654.8M912 660" fill="none" stroke="none" class="m"/>
<path d="M1138 458C1141 457.5 1145.3 457.5 1156 455C1166.7 452.5 1188.7 445.8 1202 443C1215.3 440.2 1223.2 440.5 1236 438C1248.8 435.5 1267.3 432 1279 428C1290.7 424 1299.8 418 1306 414C1312.2 410 1313.2 408.3 1316 404C1318.8 399.7 1322.3 393.7 1323 388C1323.7 382.3 1320.5 373 1320 370" fill="none" stroke="#5577e6" stroke-width="5.2" />
<path d="M1138 458C1141 457.5 1145.3 457.5 1156 455C1166.7 452.5 1188.7 445.8 1202 443C1215.3 440.2 1223.2 440.5 1236 438C1248.8 435.5 1267.3 432 1279 428C1290.7 424 1299.8 418 1306 414C1312.2 410 1313.2 408.3 1316 404C1318.8 399.7 1322.3 393.7 1323 388C1323.7 382.3 1320.5 373 1320 370" fill="none" stroke="#0b0b0b" stroke-width="3.6" />
<path d="M1138 458M1155.6 453.2M1202.4 444.8M1235.7 436.2M1279.6 429.7M1305 412.5M1317.5 405M1321.2 387.8M1320 370" fill="none" stroke="none" class="m"/>
<path d="M1280 349L1288 352L1303 367" fill="none" stroke="#5577e6" stroke-width="4.7" />
<path d="M1280 349L1288 352L1303 367" fill="none" stroke="#0b0b0b" stroke-width="3.1" />
<path d="M1280 349M1289 350.8M1303 367" fill="none" stroke="none" class="m"/>
<path d="M1313 339L1315 350L1316 359" fill="none" stroke="#5577e6" stroke-width="4.7" />
<path d="M1313 339L1315 350L1316 359" fill="none" stroke="#0b0b0b" stroke-width="3.1" />
<path d="M1313 339M1316.6 349.8M1316 359" fill="none" stroke="none" class="m"/>
<path d="M1348 337L1338 347L1326 358" fill="none" stroke="#5577e6" stroke-width="4.7" />
<path d="M1348 337L1338 347L1326 358" fill="none" stroke="#0b0b0b" stroke-width="3.1" />
<path d="M1348 337M1339.1 348.1M1326 358" fill="none" stroke="none" class="m"/>
<path d="M956 878C955.8 881.7 955.2 890.3 955 900C954.8 909.7 955 927.7 955 936C955 944.3 955.2 941.7 955 950C954.8 958.3 954.5 978.7 954 986C953.5 993.3 952.3 992.7 952 994" fill="none" stroke="#5577e6" stroke-width="5.2" />
<path d="M956 878C955.8 881.7 955.2 890.3 955 900C954.8 909.7 955 927.7 955 936C955 944.3 955.2 941.7 955 950C954.8 958.3 954.5 978.7 954 986C953.5 993.3 952.3 992.7 952 994" fill="none" stroke="#0b0b0b" stroke-width="3.6" />
<path d="M956 878M956.8 900M953.2 936M956.8 950M952.2 985.9M952 994" fill="none" stroke="none" class="m"/>
<path d="M950 994C950 993 941.7 991.5 934 988C926.3 984.5 911.3 975.3 904 973C896.7 970.7 894.5 972.3 890 974C885.5 975.7 879.5 980 877 983C874.5 986 874 989.2 875 992C876 994.8 876.2 999.3 883 1000C889.8 1000.7 907.5 997 916 996C924.5 995 928.3 994.3 934 994C939.7 993.7 950 995 950 994Z" fill="none" stroke="#5577e6" stroke-width="5.7" />
<path d="M950 994C950 993 941.7 991.5 934 988C926.3 984.5 911.3 975.3 904 973C896.7 970.7 894.5 972.3 890 974C885.5 975.7 879.5 980 877 983C874.5 986 874 989.2 875 992C876 994.8 876.2 999.3 883 1000C889.8 1000.7 907.5 997 916 996C924.5 995 928.3 994.3 934 994C939.7 993.7 950 995 950 994Z" fill="none" stroke="#0b0b0b" stroke-width="4.1" />
<path d="M952 994M933.2 989.8M904.6 971.1M890.7 975.9M875.4 981.7M876.9 991.3M882.8 1002M915.8 994M934.1 996" fill="none" stroke="none" class="m"/>
<path d="M1087 868C1087.2 870.7 1087.3 876.3 1088 884C1088.7 891.7 1088.7 901 1091 914C1093.3 927 1099.8 952 1102 962C1104.2 972 1103.7 972 1104 974" fill="none" stroke="#5577e6" stroke-width="5.2" />
<path d="M1087 868C1087.2 870.7 1087.3 876.3 1088 884C1088.7 891.7 1088.7 901 1091 914C1093.3 927 1099.8 952 1102 962C1104.2 972 1103.7 972 1104 974" fill="none" stroke="#0b0b0b" stroke-width="3.6" />
<path d="M1087 868M1089.8 883.8M1089.2 914.3M1103.8 961.6M1104 974" fill="none" stroke="none" class="m"/>
<path d="M1106 966C1108.7 963 1114 958.7 1118 956C1122 953.3 1126.3 951.2 1130 950C1133.7 948.8 1136.7 949 1140 949C1143.3 949 1147 948 1150 950C1153 952 1157.7 957.3 1158 961C1158.3 964.7 1154.3 969.5 1152 972C1149.7 974.5 1147.3 974.8 1144 976C1140.7 977.2 1137.8 977.7 1132 979C1126.2 980.3 1114 984.8 1109 984C1104 983.2 1102.5 977 1102 974C1101.5 971 1103.3 969 1106 966Z" fill="none" stroke="#5577e6" stroke-width="5.7" />
<path d="M1106 966C1108.7 963 1114 958.7 1118 956C1122 953.3 1126.3 951.2 1130 950C1133.7 948.8 1136.7 949 1140 949C1143.3 949 1147 948 1150 950C1153 952 1157.7 957.3 1158 961C1158.3 964.7 1154.3 969.5 1152 972C1149.7 974.5 1147.3 974.8 1144 976C1140.7 977.2 1137.8 977.7 1132 979C1126.2 980.3 1114 984.8 1109 984C1104 983.2 1102.5 977 1102 974C1101.5 971 1103.3 969 1106 966Z" fill="none" stroke="#0b0b0b" stroke-width="4.1" />
<path d="M1107.5 967.3M1116.9 954.3M1130.6 951.9M1140 947M1148.9 951.7M1160 960.8M1150.5 970.6M1144.7 977.9M1131.5 977M1108.7 986M1104 973.7" fill="none" stroke="none" class="m"/>
<path d="M914 680C913.8 684.2 914.1 712.6 914 720C913.9 727.4 913.4 747.8 913 754C912.6 760.2 910.8 776.2 910 782C909.2 787.8 906.4 804.6 905 812C903.6 819.4 897.3 850.6 896 856C894.7 861.4 891.9 864.5 892 866C892.1 867.5 891.2 870 897 871C902.8 872 939.7 875.6 950 876C960.3 876.4 994.3 875.5 1000 875C1005.7 874.5 1006.5 872.3 1007 871C1007.5 869.7 1004.8 866.1 1005 862C1005.2 857.9 1008.1 836.3 1009 830C1009.9 823.7 1013.1 799.4 1014 799C1014.9 798.6 1016.4 820.1 1018 826C1019.6 831.9 1028.2 854 1030 858C1031.8 862 1034.4 864.8 1036 866C1037.6 867.2 1041.6 869.8 1046 870C1050.4 870.2 1074.8 868.8 1080 868C1085.2 867.2 1091.8 863.3 1098 862C1104.2 860.7 1137 856.4 1142 855C1147 853.6 1149.2 854.3 1148 848C1146.8 841.7 1133.4 801.8 1130 792C1126.6 782.2 1116.3 758.2 1114 750C1111.7 741.8 1108 716.8 1107 710C1106 703.2 1104.2 685.8 1104 682C1103.8 678.2 1106 672.7 1105 672C1104 671.3 1101.3 673.2 1094 675C1086.7 676.8 1040.8 688.5 1032 690C1023.2 691.5 1013.8 690.4 1006 690C998.2 689.6 963 687.2 954 686C945 684.8 920 678.6 916 678C912 677.4 914.2 675.8 914 680Z" fill="#226b3b" stroke="#5577e6" stroke-width="5.8" />
<path d="M914 680C913.8 684.2 914.1 712.6 914 720C913.9 727.4 913.4 747.8 913 754C912.6 760.2 910.8 776.2 910 782C909.2 787.8 906.4 804.6 905 812C903.6 819.4 897.3 850.6 896 856C894.7 861.4 891.9 864.5 892 866C892.1 867.5 891.2 870 897 871C902.8 872 939.7 875.6 950 876C960.3 876.4 994.3 875.5 1000 875C1005.7 874.5 1006.5 872.3 1007 871C1007.5 869.7 1004.8 866.1 1005 862C1005.2 857.9 1008.1 836.3 1009 830C1009.9 823.7 1013.1 799.4 1014 799C1014.9 798.6 1016.4 820.1 1018 826C1019.6 831.9 1028.2 854 1030 858C1031.8 862 1034.4 864.8 1036 866C1037.6 867.2 1041.6 869.8 1046 870C1050.4 870.2 1074.8 868.8 1080 868C1085.2 867.2 1091.8 863.3 1098 862C1104.2 860.7 1137 856.4 1142 855C1147 853.6 1149.2 854.3 1148 848C1146.8 841.7 1133.4 801.8 1130 792C1126.6 782.2 1116.3 758.2 1114 750C1111.7 741.8 1108 716.8 1107 710C1106 703.2 1104.2 685.8 1104 682C1103.8 678.2 1106 672.7 1105 672C1104 671.3 1101.3 673.2 1094 675C1086.7 676.8 1040.8 688.5 1032 690C1023.2 691.5 1013.8 690.4 1006 690C998.2 689.6 963 687.2 954 686C945 684.8 920 678.6 916 678C912 677.4 914.2 675.8 914 680Z" fill="none" stroke="#0b0b0b" stroke-width="4.199999999999999" />
<path d="M911.9 679.9M916.1 720M910.9 753.9M912.1 782.3M903 811.6M898 856.5M889.9 866.1M897.4 869M949.9 878.1M999.8 872.9M1008.9 871.7M1002.9 861.9M1011 830.3M1013.2 797.1M1016 826.5M1031.9 857.2M1034.8 867.7M1046.1 867.9M1080.3 870M1097.6 860M1142.6 857M1146 848.4M1132 791.3M1112 750.6M1109 709.7M1101.9 682.1M1106.2 670.3M1094.5 677M1031.7 688M1005.9 692.1M954.3 683.9M915.7 680" fill="none" stroke="none" class="m"/>
<path d="M914 456C911.9 453 904.7 458.8 902 460C899.3 461.2 890 465.8 887 468C884 470.2 874.9 479.6 872 482C869.1 484.4 859.6 490.2 858 492C856.4 493.8 855.5 497.8 856 500C856.5 502.2 861.6 511.8 863 514C864.4 516.2 868.9 520.2 870 522C871.1 523.8 873 529.2 874 532C875 534.8 878.8 547.6 880 550C881.2 552.4 883.2 556.3 886 556C888.8 555.7 904.8 547.8 908 547C911.2 546.2 916.5 548.1 918 548C919.5 547.9 922.7 547.6 923 546C923.3 544.4 920.9 535 921 532C921.1 529 923.4 519 924 516C924.6 513 927.1 504.6 927 502C926.9 499.4 924.3 494.6 923 490C921.7 485.4 916.1 459 914 456Z" fill="#4bad3c" stroke="#5577e6" stroke-width="6.2" />
<path d="M914 456C911.9 453 904.7 458.8 902 460C899.3 461.2 890 465.8 887 468C884 470.2 874.9 479.6 872 482C869.1 484.4 859.6 490.2 858 492C856.4 493.8 855.5 497.8 856 500C856.5 502.2 861.6 511.8 863 514C864.4 516.2 868.9 520.2 870 522C871.1 523.8 873 529.2 874 532C875 534.8 878.8 547.6 880 550C881.2 552.4 883.2 556.3 886 556C888.8 555.7 904.8 547.8 908 547C911.2 546.2 916.5 548.1 918 548C919.5 547.9 922.7 547.6 923 546C923.3 544.4 920.9 535 921 532C921.1 529 923.4 519 924 516C924.6 513 927.1 504.6 927 502C926.9 499.4 924.3 494.6 923 490C921.7 485.4 916.1 459 914 456Z" fill="none" stroke="#0b0b0b" stroke-width="4.6" />
<path d="M915.8 454.7M902.9 462.1M885.7 466.2M873.4 483.7M856.3 490.5M858.2 499.5M861.1 515.2M871.9 520.8M871.9 532.8M882 549M886.2 558.2M907.5 544.8M918.1 550.2M920.8 545.6M923.2 532.1M921.8 515.6M929.2 501.9M920.8 490.6" fill="none" stroke="none" class="m"/>
<path d="M1086 452C1085.9 450.2 1086.6 450.9 1088 450C1089.4 449.1 1097.5 444.3 1100 443C1102.5 441.7 1110.3 438.2 1113 437C1115.7 435.8 1125.3 430.3 1127 431C1128.7 431.7 1129.1 441.5 1130 444C1130.9 446.5 1134.3 453 1136 456C1137.7 459 1145.3 471.3 1147 474C1148.7 476.7 1152.1 481.1 1153 483C1153.9 484.9 1156.3 491.1 1156 493C1155.7 494.9 1154.2 499.1 1150 502C1145.8 504.9 1119.2 520.3 1114 522C1108.8 523.7 1100 520.6 1098 519C1096 517.4 1094.8 509.1 1094 506C1093.2 502.9 1090.5 491.8 1090 488C1089.5 484.2 1089.4 471.6 1089 468C1088.6 464.4 1086.1 453.8 1086 452Z" fill="#4bad3c" stroke="#5577e6" stroke-width="6.2" />
<path d="M1086 452C1085.9 450.2 1086.6 450.9 1088 450C1089.4 449.1 1097.5 444.3 1100 443C1102.5 441.7 1110.3 438.2 1113 437C1115.7 435.8 1125.3 430.3 1127 431C1128.7 431.7 1129.1 441.5 1130 444C1130.9 446.5 1134.3 453 1136 456C1137.7 459 1145.3 471.3 1147 474C1148.7 476.7 1152.1 481.1 1153 483C1153.9 484.9 1156.3 491.1 1156 493C1155.7 494.9 1154.2 499.1 1150 502C1145.8 504.9 1119.2 520.3 1114 522C1108.8 523.7 1100 520.6 1098 519C1096 517.4 1094.8 509.1 1094 506C1093.2 502.9 1090.5 491.8 1090 488C1089.5 484.2 1089.4 471.6 1089 468C1088.6 464.4 1086.1 453.8 1086 452Z" fill="none" stroke="#0b0b0b" stroke-width="4.6" />
<path d="M1088.2 451.9M1086.8 448.1M1101 445M1112.1 434.9M1126.1 433.1M1132.1 443.2M1134 457.1M1148.9 472.8M1151 484M1158.2 493.4M1148.7 500.1M1114.7 524.1M1099.4 517.2M1091.8 506.6M1092.2 487.7M1086.8 468.2" fill="none" stroke="none" class="m"/>
<path d="M944 443C941 443.2 931 446.7 928 448C925 449.3 914.5 451.8 914 456C913.5 460.2 921.7 485.4 923 490C924.3 494.6 926.9 499.4 927 502C927.1 504.6 924.6 513 924 516C923.4 519 921.1 528.9 921 532C920.9 535.1 923.2 545 923 547C922.8 549 920.2 546.4 919 552C917.8 557.6 911.7 594 911 603C910.3 612 912 636.7 912 642C912 647.3 911 652.6 911 656C911 659.4 911.5 673.8 912 676C912.5 678.2 911.8 677.1 916 678C920.2 678.9 945 683.9 954 685C963 686.1 998.2 688.6 1006 689C1013.8 689.4 1023.2 690.6 1032 689C1040.8 687.4 1086.9 675.5 1094 673C1101.1 670.5 1102 670.3 1103 664C1104 657.7 1103.4 617.6 1104 610C1104.6 602.4 1108.8 595.6 1109 588C1109.2 580.4 1106.7 540.6 1106 534C1105.3 527.4 1102.8 523.5 1102 522C1101.2 520.5 1098.8 520.6 1098 519C1097.2 517.4 1094.8 509.1 1094 506C1093.2 502.9 1090.5 491.8 1090 488C1089.5 484.2 1089.4 471.6 1089 468C1088.6 464.4 1087.3 453.8 1086 452C1084.7 450.2 1078 450.6 1076 450C1074 449.4 1068.6 446.4 1066 446C1063.4 445.6 1053.8 445.9 1050 446C1046.2 446.1 1033 446.4 1028 447C1023 447.6 1005.3 452 1000 452C994.7 452 979.2 447.6 975 447C970.8 446.4 961.1 446.4 958 446C954.9 445.6 947 442.8 944 443Z" fill="#4bad3c" stroke="#5577e6" stroke-width="6.2" />
<path d="M944 443C941 443.2 931 446.7 928 448C925 449.3 914.5 451.8 914 456C913.5 460.2 921.7 485.4 923 490C924.3 494.6 926.9 499.4 927 502C927.1 504.6 924.6 513 924 516C923.4 519 921.1 528.9 921 532C920.9 535.1 923.2 545 923 547C922.8 549 920.2 546.4 919 552C917.8 557.6 911.7 594 911 603C910.3 612 912 636.7 912 642C912 647.3 911 652.6 911 656C911 659.4 911.5 673.8 912 676C912.5 678.2 911.8 677.1 916 678C920.2 678.9 945 683.9 954 685C963 686.1 998.2 688.6 1006 689C1013.8 689.4 1023.2 690.6 1032 689C1040.8 687.4 1086.9 675.5 1094 673C1101.1 670.5 1102 670.3 1103 664C1104 657.7 1103.4 617.6 1104 610C1104.6 602.4 1108.8 595.6 1109 588C1109.2 580.4 1106.7 540.6 1106 534C1105.3 527.4 1102.8 523.5 1102 522C1101.2 520.5 1098.8 520.6 1098 519C1097.2 517.4 1094.8 509.1 1094 506C1093.2 502.9 1090.5 491.8 1090 488C1089.5 484.2 1089.4 471.6 1089 468C1088.6 464.4 1087.3 453.8 1086 452C1084.7 450.2 1078 450.6 1076 450C1074 449.4 1068.6 446.4 1066 446C1063.4 445.6 1053.8 445.9 1050 446C1046.2 446.1 1033 446.4 1028 447C1023 447.6 1005.3 452 1000 452C994.7 452 979.2 447.6 975 447C970.8 446.4 961.1 446.4 958 446C954.9 445.6 947 442.8 944 443Z" fill="none" stroke="#0b0b0b" stroke-width="4.6" />
<path d="M943.9 440.8M928.9 450.1M911.8 455.7M925.2 489.4M924.8 502.1M926.2 516.4M918.8 531.9M925.2 547.2M916.8 551.5M913.2 603.2M909.8 642M913.2 656M909.8 676.5M916.5 675.8M953.7 687.2M1006.1 686.8M1032.4 691.2M1093.3 670.9M1105.2 664.4M1101.8 609.8M1111.2 588.1M1103.8 534.2M1104 520.9M1096 520M1096.2 505.4M1087.8 488.3M1091.2 467.8M1084.2 453.3M1076.6 447.8M1065.7 448.2M1049.9 443.8M1028.3 449.2M1000 449.8M974.7 449.2M958.3 443.8" fill="none" stroke="none" class="m"/>
<path d="M979 420L980 440L1009 466L1026 448L1021 420Z" fill="#f5d9cb" stroke="#5577e6" stroke-width="5.2" />
<path d="M979 420L980 440L1009 466L1026 448L1021 420Z" fill="none" stroke="#0b0b0b" stroke-width="3.6" />
<path d="M946 442C946.5 441.3 954.7 438.4 956 438C957.3 437.6 964.8 436.1 966 436C967.2 435.9 973.1 436.5 974 437C974.9 437.5 977.7 442.8 979 444C980.3 445.2 991.3 453.5 993 455C994.7 456.5 1004.4 465.4 1005 467C1005.6 468.6 1002.7 477.2 1002 479C1001.3 480.8 995.1 493.9 994 494C992.9 494.1 987.2 482.6 986 481C984.8 479.4 977.8 471.6 976 470C974.2 468.4 960.8 458.4 959 457C957.2 455.6 949.9 450 949 449C948.1 448 945.5 442.7 946 442Z" fill="#297a40" stroke="#5577e6" stroke-width="5.4" />
<path d="M946 442C946.5 441.3 954.7 438.4 956 438C957.3 437.6 964.8 436.1 966 436C967.2 435.9 973.1 436.5 974 437C974.9 437.5 977.7 442.8 979 444C980.3 445.2 991.3 453.5 993 455C994.7 456.5 1004.4 465.4 1005 467C1005.6 468.6 1002.7 477.2 1002 479C1001.3 480.8 995.1 493.9 994 494C992.9 494.1 987.2 482.6 986 481C984.8 479.4 977.8 471.6 976 470C974.2 468.4 960.8 458.4 959 457C957.2 455.6 949.9 450 949 449C948.1 448 945.5 442.7 946 442Z" fill="none" stroke="#0b0b0b" stroke-width="3.8000000000000003" />
<path d="M947.6 443M955.5 436.2M966.1 437.9M975 435.4M977.7 445.4M994.3 453.6M1003.2 467.7M1003.8 479.7M993.8 492.1M984.5 482.1M977.3 468.6M957.8 458.5M950.4 447.8" fill="none" stroke="none" class="m"/>
<path d="M1026 431C1026.6 430.5 1033.5 432.5 1036 433C1038.5 433.5 1061.4 437 1063 438C1064.6 439 1060.8 446.6 1060 448C1059.2 449.4 1052.5 457.1 1051 459C1049.5 460.9 1039.3 473.7 1038 476C1036.7 478.3 1032 492.3 1031 493C1030 493.7 1024 488.1 1023 487C1022 485.9 1016.5 478.3 1016 477C1015.5 475.7 1014.3 468.6 1015 467C1015.7 465.4 1026.2 454.8 1027 453C1027.8 451.2 1027.1 441.5 1027 440C1026.9 438.5 1025.4 431.5 1026 431Z" fill="#297a40" stroke="#5577e6" stroke-width="5.4" />
<path d="M1026 431C1026.6 430.5 1033.5 432.5 1036 433C1038.5 433.5 1061.4 437 1063 438C1064.6 439 1060.8 446.6 1060 448C1059.2 449.4 1052.5 457.1 1051 459C1049.5 460.9 1039.3 473.7 1038 476C1036.7 478.3 1032 492.3 1031 493C1030 493.7 1024 488.1 1023 487C1022 485.9 1016.5 478.3 1016 477C1015.5 475.7 1014.3 468.6 1015 467C1015.7 465.4 1026.2 454.8 1027 453C1027.8 451.2 1027.1 441.5 1027 440C1026.9 438.5 1025.4 431.5 1026 431Z" fill="none" stroke="#0b0b0b" stroke-width="3.8000000000000003" />
<path d="M1027.2 432.5M1036.4 431.1M1062 439.6M1061.6 448.9M1049.5 457.8M1039.6 477M1029.9 491.5M1021.6 488.3M1017.8 476.3M1013.3 466.2M1028.7 453.8M1025.1 440.1" fill="none" stroke="none" class="m"/>
<rect x="1004" y="468" width="10" height="9" fill="#0b0b0b"/>
<path d="M1003 467M1014 467M1008 479M1001 477M1015 477M1009 464" fill="none" stroke="none" class="m"/>
<ellipse cx="1014" cy="510" rx="9" ry="8.200" fill="#4bad3c" stroke="#0b0b0b" stroke-width="3.600"/>
<rect x="1011.5" y="507.5" width="5" height="5" fill="#2a8a4c"/>
<path d="M1002.5 510M1025.5 510M1014 499.5M1014 520.5M1008 507M1020 513M1017 504M1011 516" fill="none" stroke="none" class="m"/>
<ellipse cx="1018" cy="543" rx="9" ry="8.200" fill="#4bad3c" stroke="#0b0b0b" stroke-width="3.600"/>
<rect x="1015.5" y="540.5" width="5" height="5" fill="#2a8a4c"/>
<path d="M1006.5 543M1029.5 543M1018 532.5M1018 553.5M1012 540M1024 546M1021 537M1015 549" fill="none" stroke="none" class="m"/>
<ellipse cx="1017" cy="572" rx="9" ry="8.200" fill="#4bad3c" stroke="#0b0b0b" stroke-width="3.600"/>
<rect x="1014.5" y="569.5" width="5" height="5" fill="#2a8a4c"/>
<path d="M1005.5 572M1028.5 572M1017 561.5M1017 582.5M1011 569M1023 575M1020 566M1014 578" fill="none" stroke="none" class="m"/>
<ellipse cx="1015" cy="606" rx="9" ry="8.200" fill="#4bad3c" stroke="#0b0b0b" stroke-width="3.600"/>
<rect x="1012.5" y="603.5" width="5" height="5" fill="#2a8a4c"/>
<path d="M1003.5 606M1026.5 606M1015 595.5M1015 616.5M1009 603M1021 609M1018 600M1012 612" fill="none" stroke="none" class="m"/>
<ellipse cx="1013" cy="640" rx="9" ry="8.200" fill="#4bad3c" stroke="#0b0b0b" stroke-width="3.600"/>
<rect x="1010.5" y="637.5" width="5" height="5" fill="#2a8a4c"/>
<path d="M1001.5 640M1024.5 640M1013 629.5M1013 650.5M1007 637M1019 643M1016 634M1010 646" fill="none" stroke="none" class="m"/>
<ellipse cx="1010" cy="671" rx="9" ry="8.200" fill="#4bad3c" stroke="#0b0b0b" stroke-width="3.600"/>
<rect x="1007.5" y="668.5" width="5" height="5" fill="#2a8a4c"/>
<path d="M998.5 671M1021.5 671M1010 660.5M1010 681.5M1004 668M1016 674M1013 665M1007 677" fill="none" stroke="none" class="m"/>
<path d="M890.6 338.6C888.7 343 884.9 350.9 880.8 354.2C876.7 357.6 870.6 359.5 865.7 358.9C860.8 358.2 855.1 354.9 851.5 350.5C848 346.2 845 339 844.3 332.8C843.5 326.5 844.6 318.6 847 313C849.4 307.5 854 302 858.5 299.5C863 297 869.2 296.4 874 298C878.7 299.6 884 304 887 309C890 314 891.4 323.1 892 328C892.6 332.9 892.4 334.2 890.6 338.6Z" fill="#f5d9cb" stroke="#5577e6" stroke-width="5.7" />
<path d="M890.6 338.6C888.7 343 884.9 350.9 880.8 354.2C876.7 357.6 870.6 359.5 865.7 358.9C860.8 358.2 855.1 354.9 851.5 350.5C848 346.2 845 339 844.3 332.8C843.5 326.5 844.6 318.6 847 313C849.4 307.5 854 302 858.5 299.5C863 297 869.2 296.4 874 298C878.7 299.6 884 304 887 309C890 314 891.4 323.1 892 328C892.6 332.9 892.4 334.2 890.6 338.6Z" fill="none" stroke="#0b0b0b" stroke-width="4.1" />
<path d="M888.7 337.8M882.1 355.8M866 356.9M849.9 351.8M846.3 332.6M845.1 312.2M859.5 301.3M874.6 296.1M885.3 310M894 327.8" fill="none" stroke="none" class="m"/>
<path d="M1152.7 292.4C1151.4 296.3 1148.9 306.1 1145.5 310.4C1142 314.6 1136.5 317.7 1131.9 318C1127.3 318.2 1121.6 315.7 1117.9 311.9C1114.2 308 1110.8 301 1109.7 294.7C1108.5 288.5 1109.1 280.1 1111 274.2C1112.9 268.3 1117 262.2 1121.1 259.3C1125.2 256.4 1131.2 255.3 1135.7 256.7C1140.2 258.1 1145.2 262.5 1148.1 267.5C1151 272.6 1152.2 282.9 1153 287C1153.8 291.1 1153.9 288.5 1152.7 292.4Z" fill="#f5d9cb" stroke="#5577e6" stroke-width="5.7" />
<path d="M1152.7 292.4C1151.4 296.3 1148.9 306.1 1145.5 310.4C1142 314.6 1136.5 317.7 1131.9 318C1127.3 318.2 1121.6 315.7 1117.9 311.9C1114.2 308 1110.8 301 1109.7 294.7C1108.5 288.5 1109.1 280.1 1111 274.2C1112.9 268.3 1117 262.2 1121.1 259.3C1125.2 256.4 1131.2 255.3 1135.7 256.7C1140.2 258.1 1145.2 262.5 1148.1 267.5C1151 272.6 1152.2 282.9 1153 287C1153.8 291.1 1153.9 288.5 1152.7 292.4Z" fill="none" stroke="#0b0b0b" stroke-width="4.1" />
<path d="M1150.8 291.8M1147.1 311.7M1131.8 316M1116.4 313.3M1111.7 294.3M1109.1 273.6M1122.3 261M1136.3 254.8M1146.3 268.5M1155 286.6" fill="none" stroke="none" class="m"/>
<path d="M1112.8 327.9C1110.3 337.6 1107.5 353.1 1100.5 365.6C1093.4 378 1085.4 386.6 1074.2 395.9C1063 405.1 1053.1 411.2 1039.5 416C1025.8 420.7 1014.2 422.1 999.7 421.7C985.1 421.4 973.8 419 960.1 413.9C946.4 408.9 936 403.4 924.9 394C913.9 384.6 906.7 375.2 900 362.6C893.2 350 889.6 339.3 888.1 325.3C886.7 311.2 888 299.8 891.8 286.1C895.7 272.3 900.6 261.7 909 250.2C917.4 238.6 925.6 230.9 937.7 223C949.7 215.1 960.4 210.2 974.7 207C988.9 203.7 1001 203.6 1015.5 205.4C1030 207.2 1041 210.3 1053.8 216.9C1066.6 223.4 1075.5 230.5 1085.2 241.1C1094.9 251.8 1101.5 261.9 1106.9 275.1C1112.2 288.2 1113.3 303 1114.4 312.7C1115.5 322.4 1115.4 318.2 1112.8 327.9Z" fill="#f5d9cb" stroke="#5577e6" stroke-width="5.3" />
<path d="M1112.8 327.9C1110.3 337.6 1107.5 353.1 1100.5 365.6C1093.4 378 1085.4 386.6 1074.2 395.9C1063 405.1 1053.1 411.2 1039.5 416C1025.8 420.7 1014.2 422.1 999.7 421.7C985.1 421.4 973.8 419 960.1 413.9C946.4 408.9 936 403.4 924.9 394C913.9 384.6 906.7 375.2 900 362.6C893.2 350 889.6 339.3 888.1 325.3C886.7 311.2 888 299.8 891.8 286.1C895.7 272.3 900.6 261.7 909 250.2C917.4 238.6 925.6 230.9 937.7 223C949.7 215.1 960.4 210.2 974.7 207C988.9 203.7 1001 203.6 1015.5 205.4C1030 207.2 1041 210.3 1053.8 216.9C1066.6 223.4 1075.5 230.5 1085.2 241.1C1094.9 251.8 1101.5 261.9 1106.9 275.1C1112.2 288.2 1113.3 303 1114.4 312.7C1115.5 322.4 1115.4 318.2 1112.8 327.9Z" fill="none" stroke="#0b0b0b" stroke-width="3.6999999999999997" />
<path d="M1111 327.4M1102.1 366.5M1073 394.5M1040.1 417.7M999.7 419.9M959.5 415.6M926.1 392.6M898.4 363.5M889.9 325.1M890 285.6M910.5 251.3M936.7 221.5M975.1 208.8M1015.7 203.6M1053 218.5M1086.6 239.9M1105.2 275.8M1116.2 312.5" fill="none" stroke="none" class="m"/>
<path d="M890 286M887 308M884 320M886 345M890 352M893 358M1100 260M1108 275M1112 306M1114 325M1117 318" fill="none" stroke="none" class="m"/>
<path d="M962 200C960.3 197.7 955.7 189.8 952 186C948.3 182.2 945.2 179.3 940 177C934.8 174.7 924.2 172.8 921 172" fill="none" stroke="#5577e6" stroke-width="4.8" />
<path d="M962 200C960.3 197.7 955.7 189.8 952 186C948.3 182.2 945.2 179.3 940 177C934.8 174.7 924.2 172.8 921 172" fill="none" stroke="#0b0b0b" stroke-width="3.2" />
<path d="M962 200M950.8 187.1M940.7 175.5M921 172" fill="none" stroke="none" class="m"/>
<path d="M958 203C955.8 201.5 950.3 196.2 945 194C939.7 191.8 932.2 190.5 926 190C919.8 189.5 913.3 190 908 191C902.7 192 896.3 195.2 894 196" fill="none" stroke="#5577e6" stroke-width="4.8" />
<path d="M958 203C955.8 201.5 950.3 196.2 945 194C939.7 191.8 932.2 190.5 926 190C919.8 189.5 913.3 190 908 191C902.7 192 896.3 195.2 894 196" fill="none" stroke="#0b0b0b" stroke-width="3.2" />
<path d="M958 203M944.4 195.5M926.1 188.4M908.3 192.6M894 196" fill="none" stroke="none" class="m"/>
<path d="M960 206C956.7 206 946.7 205.7 940 206C933.3 206.3 927 206.3 920 208C913 209.7 905.2 212.7 898 216C890.8 219.3 880.5 226 877 228" fill="none" stroke="#5577e6" stroke-width="4.8" />
<path d="M960 206C956.7 206 946.7 205.7 940 206C933.3 206.3 927 206.3 920 208C913 209.7 905.2 212.7 898 216C890.8 219.3 880.5 226 877 228" fill="none" stroke="#0b0b0b" stroke-width="3.2" />
<path d="M960 206M940.1 207.6M919.6 206.4M898.7 217.5M877 228" fill="none" stroke="none" class="m"/>
<path d="M968 198C968.7 196 970 190 972 186C974 182 976.8 177.3 980 174C983.2 170.7 989.2 167.3 991 166" fill="none" stroke="#5577e6" stroke-width="4.8" />
<path d="M968 198C968.7 196 970 190 972 186C974 182 976.8 177.3 980 174C983.2 170.7 989.2 167.3 991 166" fill="none" stroke="#0b0b0b" stroke-width="3.2" />
<path d="M968 198M970.6 185.3M981.2 175.1M991 166" fill="none" stroke="none" class="m"/>
<path d="M972 198C974.2 195.5 977 187.7 985 183C993 178.3 1010 173 1020 170C1030 167 1038 166.2 1045 165C1052 163.8 1059.2 163.3 1062 163" fill="none" stroke="#5577e6" stroke-width="4.8" />
<path d="M972 198C974.2 195.5 977 187.7 985 183C993 178.3 1010 173 1020 170C1030 167 1038 166.2 1045 165C1052 163.8 1059.2 163.3 1062 163" fill="none" stroke="#0b0b0b" stroke-width="3.2" />
<path d="M972 198M984.2 181.6M1020.5 171.6M1044.7 163.4M1062 163" fill="none" stroke="none" class="m"/>
<path d="M975 203C978.3 201.2 985.8 195.2 995 192C1004.2 188.8 1019.5 185.5 1030 184C1040.5 182.5 1051.7 183.2 1058 183C1064.3 182.8 1066.3 183 1068 183" fill="none" stroke="#5577e6" stroke-width="4.8" />
<path d="M975 203C978.3 201.2 985.8 195.2 995 192C1004.2 188.8 1019.5 185.5 1030 184C1040.5 182.5 1051.7 183.2 1058 183C1064.3 182.8 1066.3 183 1068 183" fill="none" stroke="#0b0b0b" stroke-width="3.2" />
<path d="M975 203M994.5 190.5M1030.2 185.6M1058 181.4M1068 183" fill="none" stroke="none" class="m"/>
<path d="M978 207C981.7 205.5 991.3 199.7 1000 198C1008.7 196.3 1019.3 195.8 1030 197C1040.7 198.2 1056.3 202.8 1064 205C1071.7 207.2 1074 209.2 1076 210" fill="none" stroke="#5577e6" stroke-width="4.8" />
<path d="M978 207C981.7 205.5 991.3 199.7 1000 198C1008.7 196.3 1019.3 195.8 1030 197C1040.7 198.2 1056.3 202.8 1064 205C1071.7 207.2 1074 209.2 1076 210" fill="none" stroke="#0b0b0b" stroke-width="3.2" />
<path d="M978 207M999.7 196.4M1029.8 198.6M1064.4 203.4M1076 210" fill="none" stroke="none" class="m"/>
<path d="M968 212C970 213.7 974.2 219 980 222C985.8 225 996.7 228.8 1003 230C1009.3 231.2 1013.8 229.8 1018 229C1022.2 228.2 1026.3 225.7 1028 225" fill="none" stroke="#5577e6" stroke-width="4.8" />
<path d="M968 212C970 213.7 974.2 219 980 222C985.8 225 996.7 228.8 1003 230C1009.3 231.2 1013.8 229.8 1018 229C1022.2 228.2 1026.3 225.7 1028 225" fill="none" stroke="#0b0b0b" stroke-width="3.2" />
<path d="M968 212M980.7 220.6M1002.7 231.6M1017.7 227.4M1028 225" fill="none" stroke="none" class="m"/>
<path d="M962 212C961.3 214 960.7 219.8 958 224C955.3 228.2 950.5 233.2 946 237C941.5 240.8 933.5 245.3 931 247" fill="none" stroke="#5577e6" stroke-width="4.8" />
<path d="M962 212C961.3 214 960.7 219.8 958 224C955.3 228.2 950.5 233.2 946 237C941.5 240.8 933.5 245.3 931 247" fill="none" stroke="#0b0b0b" stroke-width="3.2" />
<path d="M962 212M959.4 224.9M944.9 235.8M931 247" fill="none" stroke="none" class="m"/>
<path d="M972 214C973 216 977.5 221.7 978 226C978.5 230.3 976.5 236.5 975 240C973.5 243.5 971 245.2 969 247C967 248.8 964 250.3 963 251" fill="none" stroke="#5577e6" stroke-width="4.8" />
<path d="M972 214C973 216 977.5 221.7 978 226C978.5 230.3 976.5 236.5 975 240C973.5 243.5 971 245.2 969 247C967 248.8 964 250.3 963 251" fill="none" stroke="#0b0b0b" stroke-width="3.2" />
<path d="M972 214M979.6 225.8M973.5 239.4M970.1 248.2M963 251" fill="none" stroke="none" class="m"/>
<ellipse cx="966" cy="204" rx="13" ry="8" fill="#0b0b0b" transform="rotate(-12 966 204)"/>
<path d="M952 196M956 206M962 194M970 195M978 197M982 204M975 212M964 214M990 200M996 195M948 202M946 209M960 218M970 220" fill="none" stroke="none" class="m"/>
<ellipse cx="974" cy="294" rx="5.800" ry="6" fill="#1a1212"/><ellipse cx="1010" cy="287" rx="7" ry="7.800" fill="#1a1212"/>
<path d="M974 286M974 302M967 296M981 294M1010 278M1010 296M1002 288M1018 286" fill="none" stroke="none" class="m"/>
<path d="M926 319M928 321M939 315M941 313M934 327M936 329M1044 299M1046 301M1056 298M1058 296M1050 310M1052 312" fill="none" stroke="none" class="m"/>
<ellipse cx="996" cy="323" rx="2" ry="2.500" fill="#2a2020"/>
<path d="M989 324M991 322M1000 323M1002 321M996 318" fill="none" stroke="none" class="m"/>
<path d="M954 369C955.8 370.7 958.5 376 965 379C971.5 382 983.5 387.3 993 387C1002.5 386.7 1013.8 380.5 1022 377C1030.2 373.5 1037.3 369.2 1042 366C1046.7 362.8 1048.3 361 1050 358C1051.7 355 1052 351.3 1052 348C1052 344.7 1050.3 339.7 1050 338" fill="none" stroke="#5577e6" stroke-width="6.2" />
<path d="M954 369C955.8 370.7 958.5 376 965 379C971.5 382 983.5 387.3 993 387C1002.5 386.7 1013.8 380.5 1022 377C1030.2 373.5 1037.3 369.2 1042 366C1046.7 362.8 1048.3 361 1050 358C1051.7 355 1052 351.3 1052 348C1052 344.7 1050.3 339.7 1050 338" fill="none" stroke="#0b0b0b" stroke-width="4.6" />
<path d="M954 369M965.9 377M993.1 389.2M1021.1 374.9M1043.3 367.9M1048 356.9M1054.2 348M1050 338" fill="none" stroke="none" class="m"/>
<path d="M957 355C950 360 945 367 943 375L953 372C955 368 957 362 957 355Z" fill="#0b0b0b" stroke="#0b0b0b" stroke-width="2"/>
<path d="M957 354M942 376M954 372" fill="none" stroke="none" class="m"/>
<path d="M1199 268L1198 308C1199 320 1204 324 1212 326C1240 333 1300 333 1322 333C1360 332 1400 330 1418 324C1427 320 1429 314 1429 308L1430 268Z" fill="#553726" stroke="#5577e6" stroke-width="6.7" />
<path d="M1199 268L1198 308C1199 320 1204 324 1212 326C1240 333 1300 333 1322 333C1360 332 1400 330 1418 324C1427 320 1429 314 1429 308L1430 268Z" fill="none" stroke="#0b0b0b" stroke-width="5.1" />
<path d="M1198.6 265.6M1200.4 307.5M1211.5 328.4M1322 330.5M1418.6 326.4M1426.6 307.5M1430.4 265.6" fill="none" stroke="none" class="m"/>
<path d="M1429 272C1429 275.4 1425.9 279.2 1420.3 282.3C1414.8 285.5 1405.9 288.7 1395.6 291.1C1385.3 293.5 1372.1 295.6 1358.6 296.9C1345.2 298.3 1329.5 299 1315 299C1300.5 299 1284.8 298.3 1271.4 296.9C1257.9 295.6 1244.7 293.5 1234.4 291.1C1224.1 288.7 1215.2 285.5 1209.7 282.3C1204.1 279.2 1201 275.4 1201 272C1201 268.6 1204.1 264.8 1209.7 261.7C1215.2 258.5 1224.1 255.3 1234.4 252.9C1244.7 250.5 1257.9 248.4 1271.4 247.1C1284.8 245.7 1300.5 245 1315 245C1329.5 245 1345.2 245.7 1358.6 247.1C1372.1 248.4 1385.3 250.5 1395.6 252.9C1405.9 255.3 1414.8 258.5 1420.3 261.7C1425.9 264.8 1429 268.6 1429 272Z" fill="#97673b" stroke="#5577e6" stroke-width="6.7" />
<path d="M1429 272C1429 275.4 1425.9 279.2 1420.3 282.3C1414.8 285.5 1405.9 288.7 1395.6 291.1C1385.3 293.5 1372.1 295.6 1358.6 296.9C1345.2 298.3 1329.5 299 1315 299C1300.5 299 1284.8 298.3 1271.4 296.9C1257.9 295.6 1244.7 293.5 1234.4 291.1C1224.1 288.7 1215.2 285.5 1209.7 282.3C1204.1 279.2 1201 275.4 1201 272C1201 268.6 1204.1 264.8 1209.7 261.7C1215.2 258.5 1224.1 255.3 1234.4 252.9C1244.7 250.5 1257.9 248.4 1271.4 247.1C1284.8 245.7 1300.5 245 1315 245C1329.5 245 1345.2 245.7 1358.6 247.1C1372.1 248.4 1385.3 250.5 1395.6 252.9C1405.9 255.3 1414.8 258.5 1420.3 261.7C1425.9 264.8 1429 268.6 1429 272Z" fill="none" stroke="#0b0b0b" stroke-width="5.1" />
<path d="M1426.5 272M1421.5 284.4M1395 288.7M1358.8 299.4M1315 296.5M1271.2 299.4M1235 288.7M1208.5 284.4M1203.5 272M1208.5 259.6M1235 255.3M1271.2 244.6M1315 247.5M1358.8 244.6M1395 255.3M1421.5 259.6" fill="none" stroke="none" class="m"/>
<path d="M1242 224L1241 250C1250 270 1280 281 1304 282C1330 283 1352 281 1370 274C1385 268 1391 258 1391 250L1392 226Z" fill="#553726" stroke="#5577e6" stroke-width="6.7" />
<path d="M1242 224L1241 250C1250 270 1280 281 1304 282C1330 283 1352 281 1370 274C1385 268 1391 258 1391 250L1392 226Z" fill="none" stroke="#0b0b0b" stroke-width="5.1" />
<path d="M1241.6 221.6M1242.7 248.2M1303.5 284.4M1369.1 271.7M1393.2 251M1391.6 228.4" fill="none" stroke="none" class="m"/>
<path d="M1391 222C1391 224.9 1388.3 228.1 1383.7 230.7C1379 233.3 1371.5 235.8 1363.1 237.6C1354.8 239.4 1343.9 240.9 1333.5 241.5C1323 242.1 1311 242.1 1300.5 241.5C1290.1 240.9 1279.2 239.4 1270.9 237.6C1262.5 235.8 1255 233.3 1250.3 230.7C1245.7 228.1 1243 224.9 1243 222C1243 219.1 1245.7 215.9 1250.3 213.3C1255 210.7 1262.5 208.2 1270.9 206.4C1279.2 204.6 1290.1 203.1 1300.5 202.5C1311 201.9 1323 201.9 1333.5 202.5C1343.9 203.1 1354.8 204.6 1363.1 206.4C1371.5 208.2 1379 210.7 1383.7 213.3C1388.3 215.9 1391 219.1 1391 222Z" fill="#97673b" stroke="#5577e6" stroke-width="6.7" />
<path d="M1391 222C1391 224.9 1388.3 228.1 1383.7 230.7C1379 233.3 1371.5 235.8 1363.1 237.6C1354.8 239.4 1343.9 240.9 1333.5 241.5C1323 242.1 1311 242.1 1300.5 241.5C1290.1 240.9 1279.2 239.4 1270.9 237.6C1262.5 235.8 1255 233.3 1250.3 230.7C1245.7 228.1 1243 224.9 1243 222C1243 219.1 1245.7 215.9 1250.3 213.3C1255 210.7 1262.5 208.2 1270.9 206.4C1279.2 204.6 1290.1 203.1 1300.5 202.5C1311 201.9 1323 201.9 1333.5 202.5C1343.9 203.1 1354.8 204.6 1363.1 206.4C1371.5 208.2 1379 210.7 1383.7 213.3C1388.3 215.9 1391 219.1 1391 222Z" fill="none" stroke="#0b0b0b" stroke-width="5.1" />
<path d="M1388.5 222M1384.9 232.9M1362.6 235.2M1333.7 244M1300.7 239M1270.4 240M1251.5 228.5M1240.5 222M1251.5 215.5M1270.4 204M1300.7 205M1333.7 200M1362.6 208.8M1384.9 211.1" fill="none" stroke="none" class="m"/>
<path d="M1281 186L1281 212C1285 222 1300 229 1318 229C1336 229 1350 222 1353 212L1353 186Z" fill="#553726" stroke="#5577e6" stroke-width="6.2" />
<path d="M1281 186L1281 212C1285 222 1300 229 1318 229C1336 229 1350 222 1353 212L1353 186Z" fill="none" stroke="#0b0b0b" stroke-width="4.6" />
<path d="M1280.2 183.9M1282.7 210.5M1318 231.2M1351.3 210.6M1353.8 183.9" fill="none" stroke="none" class="m"/>
<path d="M1352 186C1352 188.2 1349.3 190.7 1345.3 192.5C1341.3 194.2 1334.3 195.8 1327.8 196.5C1321.3 197.1 1312.7 197.1 1306.2 196.5C1299.7 195.8 1292.7 194.2 1288.7 192.5C1284.7 190.7 1282 188.2 1282 186C1282 183.8 1284.7 181.3 1288.7 179.5C1292.7 177.8 1299.7 176.2 1306.2 175.5C1312.7 174.9 1321.3 174.9 1327.8 175.5C1334.3 176.2 1341.3 177.8 1345.3 179.5C1349.3 181.3 1352 183.8 1352 186Z" fill="#97673b" stroke="#5577e6" stroke-width="6.2" />
<path d="M1352 186C1352 188.2 1349.3 190.7 1345.3 192.5C1341.3 194.2 1334.3 195.8 1327.8 196.5C1321.3 197.1 1312.7 197.1 1306.2 196.5C1299.7 195.8 1292.7 194.2 1288.7 192.5C1284.7 190.7 1282 188.2 1282 186C1282 183.8 1284.7 181.3 1288.7 179.5C1292.7 177.8 1299.7 176.2 1306.2 175.5C1312.7 174.9 1321.3 174.9 1327.8 175.5C1334.3 176.2 1341.3 177.8 1345.3 179.5C1349.3 181.3 1352 183.8 1352 186Z" fill="none" stroke="#0b0b0b" stroke-width="4.6" />
<path d="M1349.8 186M1346.2 194.6M1327.6 194.3M1306 198.7M1289.6 190.4M1279.8 186M1289.6 181.6M1306 173.3M1327.6 177.7M1346.2 177.4" fill="none" stroke="none" class="m"/>
<path d="M1203.1 275.8L1205.9 279L1210.4 282.2L1216.5 285.3L1224.2 288.1L1233.2 290.6L1243.6 292.9L1255 294.9L1267.3 296.5L1280.4 297.7L1294 298.5L1308 298.9L1322 298.9L1336 298.5L1349.6 297.7L1362.7 296.5L1375 294.9L1386.4 292.9L1396.8 290.6L1405.8 288.1L1413.5 285.3L1419.6 282.2L1424.1 279L1426.9 275.8L1426.9 291.8L1424.1 295L1419.6 298.2L1413.5 301.3L1405.8 304.1L1396.8 306.6L1386.4 308.9L1375 310.9L1362.7 312.5L1349.6 313.7L1336 314.5L1322 314.9L1308 314.9L1294 314.5L1280.4 313.7L1267.3 312.5L1255 310.9L1243.6 308.9L1233.2 306.6L1224.2 304.1L1216.5 301.3L1210.4 298.2L1205.9 295L1203.1 291.8Z" fill="#0b0b0b" stroke="#0b0b0b" stroke-width="3"/>
<ellipse cx="1205.1" cy="286.3" rx="6.500" ry="3.800" fill="#d4e9f9" transform="rotate(-135.1 1205.1 286.3)"/>
<ellipse cx="1212.1" cy="291.2" rx="6.500" ry="3.800" fill="#d4e9f9" transform="rotate(-152.2 1212.1 291.2)"/>
<ellipse cx="1222.8" cy="295.6" rx="6.500" ry="3.800" fill="#d4e9f9" transform="rotate(-161.4 1222.8 295.6)"/>
<ellipse cx="1236.9" cy="299.5" rx="6.500" ry="3.800" fill="#d4e9f9" transform="rotate(-167.1 1236.9 299.5)"/>
<ellipse cx="1253.8" cy="302.7" rx="6.500" ry="3.800" fill="#d4e9f9" transform="rotate(-171.2 1253.8 302.7)"/>
<ellipse cx="1272.9" cy="305.1" rx="6.500" ry="3.800" fill="#d4e9f9" transform="rotate(-174.5 1272.9 305.1)"/>
<ellipse cx="1293.6" cy="306.5" rx="6.500" ry="3.800" fill="#d4e9f9" transform="rotate(-177.4 1293.6 306.5)"/>
<ellipse cx="1315" cy="307" rx="6.500" ry="3.800" fill="#d4e9f9" transform="rotate(180 1315 307)"/>
<ellipse cx="1336.4" cy="306.5" rx="6.500" ry="3.800" fill="#d4e9f9" transform="rotate(177.4 1336.4 306.5)"/>
<ellipse cx="1357.1" cy="305.1" rx="6.500" ry="3.800" fill="#d4e9f9" transform="rotate(174.5 1357.1 305.1)"/>
<ellipse cx="1376.2" cy="302.7" rx="6.500" ry="3.800" fill="#d4e9f9" transform="rotate(171.2 1376.2 302.7)"/>
<ellipse cx="1393.1" cy="299.5" rx="6.500" ry="3.800" fill="#d4e9f9" transform="rotate(167.1 1393.1 299.5)"/>
<ellipse cx="1407.2" cy="295.6" rx="6.500" ry="3.800" fill="#d4e9f9" transform="rotate(161.4 1407.2 295.6)"/>
<ellipse cx="1417.9" cy="291.2" rx="6.500" ry="3.800" fill="#d4e9f9" transform="rotate(152.2 1417.9 291.2)"/>
<ellipse cx="1424.9" cy="286.3" rx="6.500" ry="3.800" fill="#d4e9f9" transform="rotate(135.1 1424.9 286.3)"/>
<path d="M1209.6 285.8M1199.3 292.1M1202.1 292.3M1213.6 284.2M1203.3 295.2M1209.2 279.7M1198.4 279.3M1219.4 297.3M1205.7 297.7M1220.7 294.3M1209.4 292.1M1205.5 281.4M1220.6 294.1M1212.6 299.8M1221.6 303M1228.7 289.8M1218.3 291.5M1218.1 297.3M1218.5 294M1216.2 303.8M1220.2 294.8M1238.4 307.6M1235.5 307.9M1236.9 300.1M1237.3 289.9M1235.8 293.2M1228 305.5M1231 299M1257.8 303.8M1250.7 303.1M1254.8 308.4M1246.7 303.9M1249.3 298.2M1258.7 302.8M1254.9 307.9M1280.3 303.9M1274.9 305.2M1273.1 308.9M1272.1 305.7M1272.5 313.9M1276.5 312.6M1280.9 300.2M1294.6 315.4M1299.7 299.3M1286.8 305.4M1285.9 301.3M1285.9 309.9M1298.7 314.5M1287.3 310.8M1317.9 299.9M1321.9 316.4M1310 316.1M1313.2 306.7M1323.8 313.6M1308.9 305.6M1315.3 303.8M1331 302.9M1340.4 296.9M1337.4 305.3M1327.8 303.1M1338.7 306.8M1328.6 316.2M1341.6 315.9M1350 300.4M1348.8 310.6M1353 297.6M1355.7 313.3M1362.8 300.2M1350.8 313.4M1358.4 309.1M1368.8 293.8M1379.6 301.2M1368.5 311.5M1378.6 308.7M1368.7 309.8M1368.4 310M1375.4 299.5M1394.1 308M1388.9 292.1M1393.6 294.3M1386.1 292.7M1385 293.5M1389.7 295.6M1397.8 295.3M1407.2 289.2M1404.4 286M1402.7 285.9M1411.4 296.6M1401.6 295.1M1415 287.7M1412.9 294.3M1417.8 297.8M1416 291.3M1421.3 300.8M1415.1 297.8M1421.6 293.9M1416.2 288.1M1409.9 283.8M1417.2 291.1M1420.5 279.6M1417.4 293.1M1431.6 289.7M1421 281.1M1421.2 285.5M1418.7 285.2" fill="none" stroke="none" class="m"/>
<path d="M1245.6 226.2L1247.9 228.4L1251.1 230.6L1255.3 232.7L1260.4 234.6L1266.2 236.4L1272.8 237.9L1279.9 239.2L1287.6 240.3L1295.7 241.1L1304.1 241.7L1312.7 242L1321.3 242L1329.9 241.7L1338.3 241.1L1346.4 240.3L1354.1 239.2L1361.2 237.9L1367.8 236.4L1373.6 234.6L1378.7 232.7L1382.9 230.6L1386.1 228.4L1388.4 226.2L1388.4 240.2L1386.1 242.4L1382.9 244.6L1378.7 246.7L1373.6 248.6L1367.8 250.4L1361.2 251.9L1354.1 253.2L1346.4 254.3L1338.3 255.1L1329.9 255.7L1321.3 256L1312.7 256L1304.1 255.7L1295.7 255.1L1287.6 254.3L1279.9 253.2L1272.8 251.9L1266.2 250.4L1260.4 248.6L1255.3 246.7L1251.1 244.6L1247.9 242.4L1245.6 240.2Z" fill="#0b0b0b" stroke="#0b0b0b" stroke-width="3"/>
<ellipse cx="1248.7" cy="236.1" rx="6.500" ry="3.800" fill="#d4e9f9" transform="rotate(-144 1248.7 236.1)"/>
<ellipse cx="1259.5" cy="241.3" rx="6.500" ry="3.800" fill="#d4e9f9" transform="rotate(-160.7 1259.5 241.3)"/>
<ellipse cx="1275.5" cy="245.4" rx="6.500" ry="3.800" fill="#d4e9f9" transform="rotate(-169.3 1275.5 245.4)"/>
<ellipse cx="1295.3" cy="248.1" rx="6.500" ry="3.800" fill="#d4e9f9" transform="rotate(-175.1 1295.3 248.1)"/>
<ellipse cx="1317" cy="249" rx="6.500" ry="3.800" fill="#d4e9f9" transform="rotate(180 1317 249)"/>
<ellipse cx="1338.7" cy="248.1" rx="6.500" ry="3.800" fill="#d4e9f9" transform="rotate(175.1 1338.7 248.1)"/>
<ellipse cx="1358.5" cy="245.4" rx="6.500" ry="3.800" fill="#d4e9f9" transform="rotate(169.3 1358.5 245.4)"/>
<ellipse cx="1374.5" cy="241.3" rx="6.500" ry="3.800" fill="#d4e9f9" transform="rotate(160.7 1374.5 241.3)"/>
<ellipse cx="1385.3" cy="236.1" rx="6.500" ry="3.800" fill="#d4e9f9" transform="rotate(144 1385.3 236.1)"/>
<path d="M1252 239.5M1243.8 227.6M1242.1 233.6M1241.6 242.1M1249.8 238.4M1251 239.3M1248.5 227.1M1264.8 245.8M1259.5 241.9M1262.3 233.5M1263.7 236.9M1251.8 237.1M1263.6 236M1263.8 249.9M1275.4 243.3M1275.1 248.8M1280.3 247.6M1278 237.8M1269.1 241M1279.9 241.9M1276.7 236.7M1287.3 243.9M1298.3 251.6M1298.4 244.3M1295.5 247.5M1294.6 241.2M1302.3 242.7M1303.9 255.9M1308.3 248.3M1322.8 257.4M1316.1 244.8M1311.8 257M1311.8 250.5M1310.6 249.4M1325.1 242.4M1344.5 248.2M1345.7 251.8M1333.9 255.3M1338.5 239.5M1329.8 247.9M1337.9 244.5M1332.3 245.3M1355.2 251.6M1349.6 250M1364.6 238.6M1366.2 249.3M1365.8 241.7M1356.2 243.5M1367.5 247.1M1372 240M1370.5 233.2M1367.4 247.3M1370.7 249.2M1370 237.1M1374.7 235.7M1372.2 249.5M1392.2 241.7M1387.7 243.5M1393.2 236.9M1389.3 227.9M1389.5 235.2M1389.9 238.7M1381.5 227.9" fill="none" stroke="none" class="m"/>
<path d="M1283.2 188.8L1284.4 190L1286.1 191.2L1288.2 192.2L1290.6 193.2L1293.4 194.1L1296.5 194.9L1299.8 195.6L1303.4 196.1L1307.2 196.6L1311.1 196.8L1315 197L1319 197L1322.9 196.8L1326.8 196.6L1330.6 196.1L1334.2 195.6L1337.5 194.9L1340.6 194.1L1343.4 193.2L1345.8 192.2L1347.9 191.2L1349.6 190L1350.8 188.8L1350.8 201.8L1349.6 203L1347.9 204.2L1345.8 205.2L1343.4 206.2L1340.6 207.1L1337.5 207.9L1334.2 208.6L1330.6 209.1L1326.8 209.6L1322.9 209.8L1319 210L1315 210L1311.1 209.8L1307.2 209.6L1303.4 209.1L1299.8 208.6L1296.5 207.9L1293.4 207.1L1290.6 206.2L1288.2 205.2L1286.1 204.2L1284.4 203L1283.2 201.8Z" fill="#0b0b0b" stroke="#0b0b0b" stroke-width="3"/>
<ellipse cx="1287.9" cy="198.6" rx="6.500" ry="3.800" fill="#d4e9f9" transform="rotate(-154.8 1287.9 198.6)"/>
<ellipse cx="1305.7" cy="202.9" rx="6.500" ry="3.800" fill="#d4e9f9" transform="rotate(-173.9 1305.7 202.9)"/>
<ellipse cx="1328.3" cy="202.9" rx="6.500" ry="3.800" fill="#d4e9f9" transform="rotate(173.9 1328.3 202.9)"/>
<ellipse cx="1346.1" cy="198.6" rx="6.500" ry="3.800" fill="#d4e9f9" transform="rotate(154.8 1346.1 198.6)"/>
<path d="M1296.1 204.5M1294.6 190.5M1279.5 202.2M1295 198.2M1289.5 190.1M1285.9 205.9M1293.8 204.7M1314.2 198.6M1298.7 197M1306.2 206M1313.7 206.7M1308.4 207.4M1305 203.8M1297.5 207.7M1323.4 210.1M1330.9 199.6M1321.6 198.7M1330.7 206.3M1321.3 195.6M1328.7 204.3M1326.2 198.2M1347.9 190.3M1342.5 197.9M1354.4 201.1M1353 198.2M1341.3 194.3M1354.4 202.1M1342.6 190.5" fill="none" stroke="none" class="m"/>
<path d="M1289 128C1290.3 128 1294.1 141.7 1294.5 145C1294.9 148.3 1293.4 153.6 1292.8 156C1292.3 158.4 1290.5 164.1 1290.2 166C1289.9 167.9 1290.5 171.3 1290.2 172C1289.9 172.7 1288.1 172.7 1287.8 172C1287.5 171.3 1288.1 167.9 1287.8 166C1287.5 164.1 1285.7 158.4 1285.2 156C1284.6 153.6 1283.1 148.3 1283.5 145C1283.9 141.7 1287.7 128 1289 128Z" fill="#4f7be0" stroke="#5577e6" stroke-width="4.4" />
<path d="M1289 128C1290.3 128 1294.1 141.7 1294.5 145C1294.9 148.3 1293.4 153.6 1292.8 156C1292.3 158.4 1290.5 164.1 1290.2 166C1289.9 167.9 1290.5 171.3 1290.2 172C1289.9 172.7 1288.1 172.7 1287.8 172C1287.5 171.3 1288.1 167.9 1287.8 166C1287.5 164.1 1285.7 158.4 1285.2 156C1284.6 153.6 1283.1 148.3 1283.5 145C1283.9 141.7 1287.7 128 1289 128Z" fill="none" stroke="#0b0b0b" stroke-width="2.8000000000000003" />
<rect x="1287.5" y="142" width="3" height="6" fill="#f2d13a"/>
<path d="M1282 140M1296 140M1283.5 152M1294.5 152M1286 163M1292 163M1289 137M1289 155M1289 169M1287 129M1291 129" fill="none" stroke="none" class="m"/>
<path d="M1307 123C1308.4 123 1312.5 136.7 1313 140C1313.5 143.3 1311.8 148.6 1311.2 151C1310.6 153.4 1308.5 158.6 1308.2 161C1307.9 163.4 1308.5 170.7 1308.2 172C1307.9 173.3 1306.1 173.3 1305.8 172C1305.5 170.7 1306.1 163.4 1305.8 161C1305.5 158.6 1303.4 153.4 1302.8 151C1302.2 148.6 1300.5 143.3 1301 140C1301.5 136.7 1305.6 123 1307 123Z" fill="#4f7be0" stroke="#5577e6" stroke-width="4.4" />
<path d="M1307 123C1308.4 123 1312.5 136.7 1313 140C1313.5 143.3 1311.8 148.6 1311.2 151C1310.6 153.4 1308.5 158.6 1308.2 161C1307.9 163.4 1308.5 170.7 1308.2 172C1307.9 173.3 1306.1 173.3 1305.8 172C1305.5 170.7 1306.1 163.4 1305.8 161C1305.5 158.6 1303.4 153.4 1302.8 151C1302.2 148.6 1300.5 143.3 1301 140C1301.5 136.7 1305.6 123 1307 123Z" fill="none" stroke="#0b0b0b" stroke-width="2.8000000000000003" />
<rect x="1305.5" y="137" width="3" height="6" fill="#f2d13a"/>
<path d="M1299.5 135M1314.5 135M1301 147M1313 147M1304 158M1310 158M1307 132M1307 150M1307 169M1305 124M1309 124" fill="none" stroke="none" class="m"/>
<path d="M1322 125C1323.2 125 1326.6 138.7 1327 142C1327.4 145.3 1325.9 150.6 1325.5 153C1325.1 155.4 1323.5 160.8 1323.2 163C1322.9 165.2 1323.5 170.9 1323.2 172C1322.9 173.1 1321.1 173.1 1320.8 172C1320.5 170.9 1321.1 165.2 1320.8 163C1320.5 160.8 1318.9 155.4 1318.5 153C1318.1 150.6 1316.6 145.3 1317 142C1317.4 138.7 1320.8 125 1322 125Z" fill="#4f7be0" stroke="#5577e6" stroke-width="4.4" />
<path d="M1322 125C1323.2 125 1326.6 138.7 1327 142C1327.4 145.3 1325.9 150.6 1325.5 153C1325.1 155.4 1323.5 160.8 1323.2 163C1322.9 165.2 1323.5 170.9 1323.2 172C1322.9 173.1 1321.1 173.1 1320.8 172C1320.5 170.9 1321.1 165.2 1320.8 163C1320.5 160.8 1318.9 155.4 1318.5 153C1318.1 150.6 1316.6 145.3 1317 142C1317.4 138.7 1320.8 125 1322 125Z" fill="none" stroke="#0b0b0b" stroke-width="2.8000000000000003" />
<rect x="1320.5" y="139" width="3" height="6" fill="#f2d13a"/>
<path d="M1315.5 137M1328.5 137M1317 149M1327 149M1319 160M1325 160M1322 134M1322 152M1322 169M1320 126M1324 126" fill="none" stroke="none" class="m"/>
<path d="M1341 124C1342.3 124 1346.1 137.7 1346.5 141C1346.9 144.3 1345.4 149.6 1344.8 152C1344.3 154.4 1342.5 159.9 1342.2 162C1341.9 164.1 1342.5 169.1 1342.2 170C1341.9 170.9 1340.1 170.9 1339.8 170C1339.5 169.1 1340.1 164.1 1339.8 162C1339.5 159.9 1337.7 154.4 1337.2 152C1336.6 149.6 1335.1 144.3 1335.5 141C1335.9 137.7 1339.7 124 1341 124Z" fill="#4f7be0" stroke="#5577e6" stroke-width="4.4" />
<path d="M1341 124C1342.3 124 1346.1 137.7 1346.5 141C1346.9 144.3 1345.4 149.6 1344.8 152C1344.3 154.4 1342.5 159.9 1342.2 162C1341.9 164.1 1342.5 169.1 1342.2 170C1341.9 170.9 1340.1 170.9 1339.8 170C1339.5 169.1 1340.1 164.1 1339.8 162C1339.5 159.9 1337.7 154.4 1337.2 152C1336.6 149.6 1335.1 144.3 1335.5 141C1335.9 137.7 1339.7 124 1341 124Z" fill="none" stroke="#0b0b0b" stroke-width="2.8000000000000003" />
<rect x="1339.5" y="138" width="3" height="6" fill="#f2d13a"/>
<path d="M1334 136M1348 136M1335.5 148M1346.5 148M1338 159M1344 159M1341 133M1341 151M1341 167M1339 125M1343 125" fill="none" stroke="none" class="m"/>
<ellipse cx="1333" cy="160" rx="4" ry="7" fill="#d8ecfa"/>
<rect x="835.5" y="119.5" width="6" height="6" fill="#fff" stroke="#5577e6" stroke-width="1"/>
<rect x="1132.5" y="119.5" width="6" height="6" fill="#fff" stroke="#5577e6" stroke-width="1"/>
<rect x="1429.5" y="119.5" width="6" height="6" fill="#fff" stroke="#5577e6" stroke-width="1"/>
<rect x="835.5" y="559.5" width="6" height="6" fill="#fff" stroke="#5577e6" stroke-width="1"/>
<rect x="1429.5" y="559.5" width="6" height="6" fill="#fff" stroke="#5577e6" stroke-width="1"/>
<rect x="835.5" y="999.5" width="6" height="6" fill="#fff" stroke="#5577e6" stroke-width="1"/>
<rect x="1132.5" y="999.5" width="6" height="6" fill="#fff" stroke="#5577e6" stroke-width="1"/>
<rect x="1429.5" y="999.5" width="6" height="6" fill="#fff" stroke="#5577e6" stroke-width="1"/>
</g></svg>
<!--/ART-->
<!--LAYERS--><div id="layers" class="abs" style="left:1636px;top:75px;width:243px;height:213px;">
<div class="abs" style="left:0;top:0;width:243px;height:213px;background:#4a4a4a"></div>
<div class="abs" style="left:3px;top:0;width:240px;height:3px;background:#2c2c2c"></div>
<div class="abs" style="left:3px;top:0;width:1px;height:213px;background:#2f2f2f"></div>
<div class="abs" style="left:4px;top:3px;width:239px;height:17px;background:#333333;border-bottom:1px solid #2a2a2a;box-sizing:border-box"></div>
<div class="abs" style="left:4px;top:3px;width:47px;height:17px;background:#4a4a4a;border-right:1px solid #2c2c2c;box-sizing:border-box"></div>
<span class="abs" id="ebtab" style="left:11px;top:6px;font-size:10px;color:#e2e2e2;font-weight:bold;letter-spacing:-0.3px">Ebenen</span>
<svg class="abs" style="left:203px;top:8px" width="10" height="8" viewBox="0 0 10 8"><path d="M0 0l4.500 4L0 8zM5.500 0L10 4 5.500 8z" fill="#c6c6c6"/></svg>
<div class="abs" style="left:219px;top:5px;width:1px;height:13px;background:#555;border-right:1px solid #262626;border-left:1px solid #262626"></div>
<svg class="abs" style="left:226px;top:8px" width="15" height="8" viewBox="0 0 15 8"><path d="M0 1.500h5L2.500 4.500z" fill="#c6c6c6"/><path d="M6 0.500h8M6 2.500h8M6 4.500h8M6 6.500h8" stroke="#c6c6c6" stroke-width="1" shape-rendering="crispEdges"/></svg>
<div class="abs" style="left:9px;top:26px;width:230px;height:159px;background:#444444;border:1px solid #303030;box-sizing:border-box"></div>
<div class="abs" style="left:10px;top:27px;width:228px;height:20px;background:#474747;border-bottom:1px solid #303030"></div>
<div class="abs" style="left:30px;top:27px;width:1px;height:20px;background:#343434"></div>
<div class="abs" style="left:51px;top:27px;width:1px;height:20px;background:#343434"></div>
<div class="abs" style="left:53px;top:27px;width:4px;height:20px;background:#4a72e8"></div>
<div class="abs" style="left:203px;top:27px;width:1px;height:20px;background:#343434"></div>
<svg class="abs" style="left:13px;top:32px" width="14" height="10" viewBox="0 0 14 10"><path d="M0.500 5C3 1 11 1 13.500 5 11 9 3 9 0.500 5z" fill="none" stroke="#c6c6c6" stroke-width="1.200"/><circle cx="7" cy="5" r="2.400" fill="#c6c6c6"/><circle cx="7.800" cy="4.200" r="0.900" fill="#444"/></svg>
<svg class="abs" style="left:62px;top:35px" width="10" height="7"><path d="M0 0h9.500L4.750 6.500z" fill="#e0e0e0"/></svg>
<svg class="abs" style="left:80px;top:28px" width="18" height="18" viewBox="0 0 18 18"><rect x="0.500" y="0.500" width="17" height="17" fill="#b9dcee" stroke="#111"/><circle cx="8" cy="5" r="2.300" fill="#f4d8c8" stroke="#222" stroke-width="0.500"/><rect x="6" y="7.500" width="4" height="4" fill="#45a83e"/><rect x="6" y="11.500" width="4" height="3" fill="#1f6b3a"/><path d="M7 14.500v2.500M9.500 14.500v2.500M10 8.500l2.500-2" stroke="#222" stroke-width="0.600"/><path d="M10.500 5.500h4.500l-0.500-1.500h-3.500z" fill="#4a3020"/><rect x="11.500" y="2.500" width="2.500" height="1.500" fill="#4a3020"/></svg>
<span class="abs" id="eb1" style="left:102px;top:31px;font-size:10px;color:#e6e6e6;white-space:nowrap">Ebene 1</span>
<svg class="abs" style="left:208px;top:32px" width="11" height="11"><circle cx="5.500" cy="5.500" r="4" fill="none" stroke="#c6c6c6" stroke-width="1.100"/></svg>
<div class="abs" style="left:224px;top:34px;width:5px;height:5px;background:#4a8af4;border:1px solid #1a2a60;box-sizing:border-box"></div>
<svg class="abs" style="left:233px;top:27px" width="5" height="5"><path d="M0 0h5v5z" fill="#e0e0e0"/></svg>
<div class="abs" style="left:10px;top:48px;width:228px;height:20px;background:#545f78;border-bottom:1px solid #303030"></div>
<div class="abs" style="left:30px;top:48px;width:1px;height:20px;background:#343434"></div>
<div class="abs" style="left:51px;top:48px;width:1px;height:20px;background:#343434"></div>
<div class="abs" style="left:53px;top:48px;width:4px;height:20px;background:#4a72e8"></div>
<div class="abs" style="left:203px;top:48px;width:1px;height:20px;background:#343434"></div>
<svg class="abs" style="left:13px;top:53px" width="14" height="10" viewBox="0 0 14 10"><path d="M0.500 5C3 1 11 1 13.500 5 11 9 3 9 0.500 5z" fill="none" stroke="#c6c6c6" stroke-width="1.200"/><circle cx="7" cy="5" r="2.400" fill="#c6c6c6"/><circle cx="7.800" cy="4.200" r="0.900" fill="#444"/></svg>
<svg class="abs" style="left:82px;top:53px" width="7" height="10"><path d="M0 0v9.500L6.500 4.750z" fill="#e0e0e0"/></svg>
<svg class="abs" style="left:99px;top:49px" width="18" height="18" viewBox="0 0 18 18"><rect x="0.500" y="0.500" width="17" height="17" fill="#ffffff" stroke="#111"/><circle cx="8" cy="5" r="2.300" fill="#f4d8c8" stroke="#222" stroke-width="0.500"/><rect x="6" y="7.500" width="4" height="4" fill="#45a83e"/><rect x="6" y="11.500" width="4" height="3" fill="#1f6b3a"/><path d="M7 14.500v2.500M9.500 14.500v2.500M10 8.500l2.500-2" stroke="#222" stroke-width="0.600"/><path d="M10.500 5.500h4.500l-0.500-1.500h-3.500z" fill="#4a3020"/><rect x="11.500" y="2.500" width="2.500" height="1.500" fill="#4a3020"/></svg>
<span class="abs" id="grp" style="left:123px;top:52px;font-size:10.500px;color:#e6e6e6;white-space:nowrap">&lt;Gruppe&gt;</span>
<svg class="abs" style="left:206px;top:51px" width="15" height="15"><circle cx="7.500" cy="7.500" r="6" fill="none" stroke="#c6c6c6" stroke-width="1.100"/><circle cx="7.500" cy="7.500" r="3.700" fill="none" stroke="#c6c6c6" stroke-width="1.100"/></svg>
<div class="abs" style="left:224px;top:54px;width:8px;height:8px;background:#4a8af4;border:1px solid #1a2a60;box-sizing:border-box"></div>
<div class="abs" style="left:10px;top:69px;width:228px;height:20px;background:#474747;border-bottom:1px solid #303030"></div>
<div class="abs" style="left:30px;top:69px;width:1px;height:20px;background:#343434"></div>
<div class="abs" style="left:51px;top:69px;width:1px;height:20px;background:#343434"></div>
<div class="abs" style="left:53px;top:69px;width:4px;height:20px;background:#4a72e8"></div>
<div class="abs" style="left:203px;top:69px;width:1px;height:20px;background:#343434"></div>
<svg class="abs" style="left:13px;top:74px" width="14" height="10" viewBox="0 0 14 10"><path d="M0.500 5C3 1 11 1 13.500 5 11 9 3 9 0.500 5z" fill="none" stroke="#c6c6c6" stroke-width="1.200"/><circle cx="7" cy="5" r="2.400" fill="#c6c6c6"/><circle cx="7.800" cy="4.200" r="0.900" fill="#444"/></svg>
<div class="abs" style="left:99px;top:70px;width:18px;height:18px;background:#b9dcee;border:1px solid #111;box-sizing:border-box"></div>
<span class="abs" id="pfd" style="left:123px;top:73px;font-size:10.500px;color:#e6e6e6;white-space:nowrap">&lt;Pfad&gt;</span>
<svg class="abs" style="left:208px;top:74px" width="11" height="11"><circle cx="5.500" cy="5.500" r="4" fill="none" stroke="#c6c6c6" stroke-width="1.100"/></svg>
<span class="abs" id="ebc" style="left:9px;top:188px;font-size:10.500px;letter-spacing:-0.4px;color:#e6e6e6;white-space:nowrap">1 Ebene</span>
<svg class="abs" style="left:100px;top:187px" width="14" height="14" viewBox="0 0 14 14"><circle cx="8.500" cy="5.500" r="4" fill="none" stroke="#c6c6c6" stroke-width="1.300"/><path d="M5.500 8.500L1 13" stroke="#c6c6c6" stroke-width="1.600"/></svg>
<svg class="abs" style="left:125px;top:188px" width="13" height="13" viewBox="0 0 13 13"><rect x="4.500" y="4.500" width="8" height="8" fill="none" stroke="#808080"/><rect x="1" y="1" width="8" height="8" fill="none" stroke="#c6c6c6" stroke-width="1.400"/><rect x="3.500" y="3.500" width="4" height="4" fill="#7a7a7a"/></svg>
<svg class="abs" style="left:150px;top:188px" width="16" height="12" viewBox="0 0 16 12"><path d="M7 3h8v8H11V7H7z" fill="#6a6a6a"/><path d="M1 1v4h4M3.500 3.500L5 5" fill="none" stroke="#6a6a6a"/></svg>
<svg class="abs" style="left:178px;top:188px" width="13" height="13" viewBox="0 0 13 13"><path d="M1 1h11v11H6V7H1z" fill="#c6c6c6"/><path d="M1.500 8l4 4" stroke="#4a4a4a"/></svg>
<svg class="abs" style="left:203px;top:186px" width="13" height="15" viewBox="0 0 13 15"><path d="M1 3.500h11M4.500 3V1.500h4V3" fill="none" stroke="#c6c6c6" stroke-width="1.200"/><path d="M2.500 5h8l-0.700 9H3.200z" fill="none" stroke="#c6c6c6" stroke-width="1.200"/><path d="M5 6.500v6M6.500 6.500v6M8 6.500v6" stroke="#c6c6c6" stroke-width="0.900"/></svg>
<svg class="abs" style="left:230px;top:194px" width="9" height="9" viewBox="0 0 9 9"><path d="M8 0v1M6 2h1M8 2v1M4 4h1M6 4h1M8 4h1M2 6h1M4 6h1M6 6h1M8 6h1M0 8h1M2 8h1M4 8h1M6 8h1M8 8h1" stroke="#2a2a2a" stroke-width="1"/></svg>
<div class="abs" style="left:3px;top:204px;width:240px;height:1px;background:#2a2a2a"></div>
<div class="abs" style="left:4px;top:205px;width:239px;height:7px;background:#434343"></div>
<div class="abs" style="left:3px;top:212px;width:240px;height:1px;background:#2a2a2a"></div>
<div class="abs" style="left:114px;top:207px;width:20px;height:3px;background:repeating-linear-gradient(to right,#1c1c1c 0 1px,transparent 1px 2px)"></div>
</div><!--/LAYERS-->
<!--DOCK--><div id="dock" class="abs">
<div class="abs" style="left:0;top:0;width:39px;height:11px;background:#2c2c2c"></div>
<svg class="abs" style="left:27px;top:2px" width="9" height="6"><path d="M3.500 0L0 3l3.500 3zM8 0L4.500 3 8 6z" fill="#c8c8c8"/></svg>
<div class="abs" style="left:10px;top:14px;width:20px;height:4px;background:repeating-linear-gradient(to right,#1c1c1c 0 1px,transparent 1px 2px)"></div>
<div class="abs" style="left:5px;top:22px;width:29px;height:24px;background:#323232;border-radius:3px;box-shadow:0 0 0 1px #3c3c3c"></div>
<svg class="abs" style="left:8px;top:22px" width="24" height="24" viewBox="0 0 24 24"><path d="M12 9.500l8.500 4.500-8.500 4.700-8.500-4.700z" fill="#c6c6c6"/><path d="M12 4l8.500 4.500-8.500 4.700-8.500-4.700z" fill="#d8d8d8" stroke="#323232" stroke-width="0.800"/></svg>
<div class="abs" style="left:0px;top:51px;width:39px;height:1px;background:#2c2c2c;border-bottom:1px solid #555"></div>
<div class="abs" style="left:10px;top:55px;width:20px;height:4px;background:repeating-linear-gradient(to right,#1c1c1c 0 1px,transparent 1px 2px)"></div>
<svg class="abs" style="left:8px;top:64px" width="24" height="24" viewBox="0 0 24 24"><path d="M12 4.500c5.500 0 9.500 3 9.500 6.500 0 4-4 8-10.500 8-4.500 0-8.500-2-8.500-5 0-2 2-2.300 3.500-2.800 1.500-0.500 1-1.500 0.800-2.800C7 6 9 4.500 12 4.500z" fill="#c6c6c6"/><g fill="#555"><circle cx="7" cy="13.500" r="1.500"/><circle cx="11" cy="15.500" r="1.500"/><circle cx="15.500" cy="14.500" r="1.500"/><circle cx="18.500" cy="11" r="1.500"/><circle cx="16" cy="7.500" r="1.400"/></g></svg>
<svg class="abs" style="left:8px;top:91px" width="24" height="24" viewBox="0 0 24 24"><defs><linearGradient id="cg" x1="0" y1="0" x2="1" y2="1"><stop offset="0" stop-color="#d0d0d0"/><stop offset="1" stop-color="#303030"/></linearGradient></defs><path d="M4.500 3.500C13 3.500 20.500 10 20.500 19.500h-16z" fill="url(#cg)" stroke="#c6c6c6" stroke-width="1.200"/></svg>
<svg class="abs" style="left:8px;top:119px" width="24" height="24" viewBox="0 0 24 24"><circle cx="10" cy="12.500" r="5.500" fill="none" stroke="#c6c6c6" stroke-width="1.600"/><circle cx="10" cy="12.500" r="2.200" fill="#c6c6c6"/><path d="M19 4.500L10 12.500l9 8" fill="none" stroke="#c6c6c6" stroke-width="1.700"/><circle cx="19" cy="4.500" r="2.300" fill="#e0e0e0"/><circle cx="19" cy="20.500" r="2.300" fill="#e0e0e0"/></svg>
<div class="abs" style="left:0px;top:147px;width:39px;height:1px;background:#2c2c2c;border-bottom:1px solid #555"></div>
<div class="abs" style="left:10px;top:152px;width:20px;height:4px;background:repeating-linear-gradient(to right,#1c1c1c 0 1px,transparent 1px 2px)"></div>
<svg class="abs" style="left:8px;top:160px" width="24" height="24" viewBox="0 0 24 24"><rect x="4" y="6.500" width="16" height="11" fill="#c6c6c6"/><rect x="5" y="7.5" width="4" height="4" fill="#2e2e2e"/><rect x="10" y="7.5" width="4" height="4" fill="#4c4c4c"/><rect x="15" y="7.5" width="4" height="4" fill="#888"/><rect x="5" y="12.5" width="4" height="4" fill="#777"/><rect x="10" y="12.5" width="4" height="4" fill="#5c5c5c"/><rect x="15" y="12.5" width="4" height="4" fill="#3c3c3c"/></svg>
<svg class="abs" style="left:8px;top:188px" width="24" height="24" viewBox="0 0 24 24"><rect x="8.500" y="14" width="8" height="7" fill="#c6c6c6"/><path d="M12.500 14V5.500" stroke="#c6c6c6" stroke-width="2.200"/><path d="M9.500 14c-1-2-4-4-4-7.500 2 1 4 3.500 5 7.500z" fill="#c6c6c6"/><path d="M14.500 14c0.500-3 2-6.500 5.500-6.500 1 1.500-1.500 3-3.500 6.500z" fill="#c6c6c6"/></svg>
<svg class="abs" style="left:8px;top:216px" width="24" height="24" viewBox="0 0 24 24"><circle cx="12" cy="8" r="4" fill="#c6c6c6"/><circle cx="7.500" cy="13.500" r="4" fill="#c6c6c6"/><circle cx="16.500" cy="13.500" r="4" fill="#c6c6c6"/><path d="M12 12v6M8.500 19.500h7" stroke="#c6c6c6" stroke-width="1.800"/></svg>
<div class="abs" style="left:0px;top:245px;width:39px;height:1px;background:#2c2c2c;border-bottom:1px solid #555"></div>
<div class="abs" style="left:10px;top:250px;width:20px;height:4px;background:repeating-linear-gradient(to right,#1c1c1c 0 1px,transparent 1px 2px)"></div>
<svg class="abs" style="left:8px;top:257px" width="24" height="24" viewBox="0 0 24 24"><path d="M4 6.500h16" stroke="#c6c6c6" stroke-width="1"/><path d="M4 11h16" stroke="#c6c6c6" stroke-width="2"/><path d="M4 16.500h16" stroke="#c6c6c6" stroke-width="3"/></svg>
<svg class="abs" style="left:8px;top:285px" width="24" height="24" viewBox="0 0 24 24"><defs><linearGradient id="g2" x1="0" y1="0" x2="1" y2="0"><stop offset="0" stop-color="#404040"/><stop offset="1" stop-color="#c8c8c8"/></linearGradient></defs><rect x="4.500" y="6.500" width="16" height="11" fill="url(#g2)" stroke="#d8d8d8" stroke-width="1.100"/></svg>
<svg class="abs" style="left:8px;top:313px" width="24" height="24" viewBox="0 0 24 24"><circle cx="9.500" cy="10" r="5.500" fill="#c6c6c6"/><circle cx="14" cy="14" r="5" fill="#7a7a7a" stroke="#d8d8d8" stroke-width="1.200"/></svg>
<div class="abs" style="left:0px;top:342px;width:39px;height:1px;background:#2c2c2c;border-bottom:1px solid #555"></div>
<div class="abs" style="left:10px;top:347px;width:20px;height:4px;background:repeating-linear-gradient(to right,#1c1c1c 0 1px,transparent 1px 2px)"></div>
<svg class="abs" style="left:8px;top:354px" width="24" height="24" viewBox="0 0 24 24"><circle cx="12" cy="12" r="7.800" fill="none" stroke="#c6c6c6" stroke-width="1.300" stroke-dasharray="2.600 1.600"/><circle cx="12" cy="12" r="5.500" fill="#c6c6c6"/></svg>
<svg class="abs" style="left:8px;top:383px" width="24" height="24" viewBox="0 0 24 24"><rect x="7.500" y="4.500" width="13" height="13" fill="none" stroke="#c6c6c6" stroke-width="1.200"/><rect x="6.500" y="13.500" width="6" height="6" fill="#c6c6c6"/><rect x="4" y="11" width="6" height="6" fill="#474747" stroke="#c6c6c6" stroke-width="1.200"/></svg>
<div class="abs" style="left:0px;top:411px;width:39px;height:1px;background:#2c2c2c;border-bottom:1px solid #555"></div>
<div class="abs" style="left:10px;top:415px;width:20px;height:4px;background:repeating-linear-gradient(to right,#1c1c1c 0 1px,transparent 1px 2px)"></div>
<svg class="abs" style="left:8px;top:424px" width="24" height="24" viewBox="0 0 24 24"><rect x="5.500" y="5.500" width="13" height="13" fill="none" stroke="#c6c6c6" stroke-width="1.100" stroke-dasharray="2 1.300"/><rect x="11.300" y="11.300" width="1.400" height="1.400" fill="#e8e8e8"/><rect x="4" y="4" width="3" height="3" fill="#dcdcdc"/><rect x="10.5" y="4" width="3" height="3" fill="#dcdcdc"/><rect x="17" y="4" width="3" height="3" fill="#dcdcdc"/><rect x="4" y="10.5" width="3" height="3" fill="#dcdcdc"/><rect x="17" y="10.5" width="3" height="3" fill="#dcdcdc"/><rect x="4" y="17" width="3" height="3" fill="#dcdcdc"/><rect x="10.5" y="17" width="3" height="3" fill="#dcdcdc"/><rect x="17" y="17" width="3" height="3" fill="#dcdcdc"/></svg>
<svg class="abs" style="left:8px;top:451px" width="24" height="24" viewBox="0 0 24 24"><path d="M5 4v16" stroke="#c6c6c6" stroke-width="1.200"/><rect x="7" y="6" width="8" height="5" fill="#c6c6c6"/><rect x="7" y="13" width="12" height="5" fill="#c6c6c6"/></svg>
<svg class="abs" style="left:8px;top:479px" width="24" height="24" viewBox="0 0 24 24"><rect x="4" y="4.500" width="9.500" height="9.500" fill="#c6c6c6"/><rect x="9.500" y="10" width="10" height="10" fill="#c6c6c6"/><rect x="9.500" y="10" width="4" height="4" fill="#8a8a8a" stroke="#2a2a2a" stroke-width="1"/></svg>
<div class="abs" style="left:0px;top:508px;width:39px;height:1px;background:#2c2c2c;border-bottom:1px solid #555"></div>
<div class="abs" style="left:10px;top:513px;width:20px;height:4px;background:repeating-linear-gradient(to right,#1c1c1c 0 1px,transparent 1px 2px)"></div>
<svg class="abs" style="left:8px;top:521px" width="24" height="24" viewBox="0 0 24 24"><circle cx="11.500" cy="12" r="7.500" fill="#c6c6c6"/><circle cx="12.500" cy="12" r="7.500" fill="none" stroke="#e0e0e0" stroke-width="1"/><rect x="10.500" y="2.500" width="3" height="3" fill="#e8e8e8"/><rect x="18.500" y="10.500" width="3" height="3" fill="#e8e8e8"/><rect x="10.500" y="18.500" width="3" height="3" fill="#e8e8e8"/></svg>
<div class="abs" style="left:0px;top:548px;width:39px;height:1px;background:#2c2c2c;border-bottom:1px solid #555"></div>
</div><!--/DOCK-->
</body>
</html>
